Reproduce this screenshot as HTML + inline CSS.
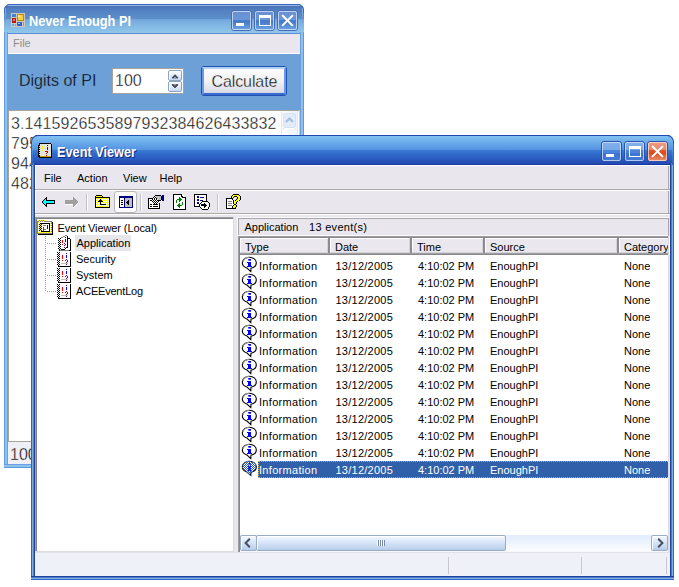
<!DOCTYPE html>
<html><head><meta charset="utf-8">
<style>
*{box-sizing:border-box}
html,body{margin:0;padding:0}
body{width:679px;height:587px;background:#fff;position:relative;overflow:hidden;font-family:"Liberation Sans",sans-serif}
.a{position:absolute}
.t{position:absolute;white-space:nowrap;line-height:1;color:#000}
</style></head><body>
<div class="a" style="left:4px;top:4px;width:300px;height:464px;background:#6ca0d6;border-radius:6px 6px 0 0;overflow:hidden">
<div class="a" style="left:0;top:0;width:300px;height:30px;background:linear-gradient(#4070c8 0px,#4070c8 1px,#90b8e8 1px,#90b8e8 2px,#4a72b4 2px,#5280c0 6px,#5888c6 11px,#5c90cc 15px,#6ea4da 15px,#78acdf 17px,#82b8e4 22px,#90c8ea 29px,#5a90e0 29px,#5a90e0 30px)"></div>
<div class="a" style="left:0;top:28px;width:4px;height:436px;background:linear-gradient(90deg,#5a9ae0 0,#5a9ae0 1px,#98c2ea 1px,#8cc0ea 3px,#6aa0e8 3px)"></div>
<div class="a" style="left:296px;top:28px;width:4px;height:436px;background:linear-gradient(90deg,#6aa0e8 0,#6aa0e8 1px,#90c0e8 1px,#90c0e8 3px,#5a9ae0 3px)"></div>
<div class="a" style="left:0;top:460px;width:300px;height:4px;background:linear-gradient(#6aa0e8 0,#6aa0e8 1px,#90c0e8 1px,#90c0e8 3px,#5a9ae0 3px)"></div>
<div class="a" style="left:1px;top:4px;width:1px;height:26px;background:linear-gradient(#90b8e8,#6a98d4 40%,#88bce6 70%,#90c4ea)"></div>
<div class="a" style="left:298px;top:4px;width:1px;height:26px;background:linear-gradient(#90b8e8,#6a98d4 40%,#88bce6 70%,#90c4ea)"></div>
<div class="a" style="left:0;top:0;width:300px;height:9px;border:1px solid #3a66c0;border-bottom:none;border-radius:6px 6px 0 0"></div>
</div>
<svg class="a" style="left:11px;top:13px" width="14" height="14" viewBox="0 0 14 14" shape-rendering="crispEdges">
<rect x="0" y="0" width="14" height="14" fill="#cfc8c0"/>
<rect x="1" y="1" width="4" height="3" fill="#4a80c8"/>
<rect x="6" y="1" width="7" height="7" fill="#b88a10"/><rect x="7" y="2" width="5" height="5" fill="#f8d040"/><rect x="7" y="2" width="2" height="2" fill="#fff0a0"/>
<rect x="1" y="5" width="4" height="5" fill="#b81808"/><rect x="2" y="6" width="2" height="2" fill="#f08070"/>
<rect x="6" y="9" width="5" height="4" fill="#3060d0"/><rect x="7" y="10" width="2" height="1" fill="#a0c0ff"/>
<rect x="1" y="11" width="2" height="2" fill="#6aa0e8"/><rect x="4" y="11" width="1" height="2" fill="#6aa0e8"/><rect x="12" y="9" width="1" height="4" fill="#6aa0e8"/>
<rect x="1" y="4" width="4" height="1" fill="#cfc8c0"/>
</svg>
<div class="t" style="left:28.5px;top:14px;font-size:14px;font-weight:bold;color:#fff;transform:scaleX(0.91);transform-origin:0 0">Never Enough PI</div>
<div class="a" style="left:231px;top:10px;width:21px;height:21px;border:1px solid #4a6cb8;border-radius:3px;background:linear-gradient(#6890d4 0px,#6a96d8 9px,#4a7ccc 9px,#4a7ccc 12px,#4a80d0 12px,#7aaee4 21px)"><div class="a" style="left:0;top:0;width:19px;height:19px;border:1px solid rgba(220,232,248,0.75);border-radius:2px"></div></div>
<div class="a" style="left:236px;top:23px;width:8px;height:3px;background:#fff"></div>
<div class="a" style="left:254px;top:10px;width:21px;height:21px;border:1px solid #4a6cb8;border-radius:3px;background:linear-gradient(#6890d4 0px,#6a96d8 9px,#4a7ccc 9px,#4a7ccc 12px,#4a80d0 12px,#7aaee4 21px)"><div class="a" style="left:0;top:0;width:19px;height:19px;border:1px solid rgba(220,232,248,0.75);border-radius:2px"></div></div>
<div class="a" style="left:259px;top:15px;width:12px;height:11px;border:1px solid #fff;border-top-width:3px"></div>
<div class="a" style="left:277px;top:10px;width:21px;height:21px;border:1px solid #4a6cb8;border-radius:3px;background:linear-gradient(#6890d4 0px,#6a96d8 9px,#4a7ccc 9px,#4a7ccc 12px,#4a80d0 12px,#7aaee4 21px)"><div class="a" style="left:0;top:0;width:19px;height:19px;border:1px solid rgba(220,232,248,0.75);border-radius:2px"></div></div>
<svg class="a" style="left:277px;top:10px" width="21" height="21" viewBox="0 0 21 21"><path d="M5.8 5.8L15.2 15.2M15.2 5.8L5.8 15.2" stroke="#fff" stroke-width="2" stroke-linecap="square"/></svg>
<div class="a" style="left:8px;top:33px;width:292px;height:1px;background:#5a8ad8"></div>
<div class="a" style="left:8px;top:34px;width:292px;height:19px;background:#e9e7ed"></div>
<div class="a" style="left:8px;top:53px;width:292px;height:1px;background:#fff"></div>
<div class="t" style="left:13px;top:38px;font-size:11px;color:#8e8e8e">File</div>
<div class="t" style="left:19px;top:73px;font-size:16px;-webkit-text-stroke:0.35px #6ca0d6">Digits of PI</div>
<div class="a" style="left:112px;top:68px;width:72px;height:26px;background:#fff;border:1px solid #a5a39a"></div>
<div class="t" style="left:115px;top:73px;font-size:16px;-webkit-text-stroke:0.35px #fff">100</div>
<div class="a" style="left:168px;top:70px;width:14px;height:11px;border:1px solid #8ea2c2;border-radius:2px;background:linear-gradient(#fcfdff,#e4eefc 50%,#c4d8f4);box-shadow:inset 1px 1px 0 #fff"></div>
<div class="a" style="left:168px;top:81px;width:14px;height:11px;border:1px solid #8ea2c2;border-radius:2px;background:linear-gradient(#fcfdff,#e4eefc 50%,#c4d8f4);box-shadow:inset 1px 1px 0 #fff"></div>
<svg class="a" style="left:168px;top:70px" width="14" height="22" viewBox="0 0 14 22"><path d="M4 7.9L7 4.7L10 7.9Z" fill="#404858" stroke="#404858" stroke-width="1"/><path d="M4 14.7L7 17.9L10 14.7Z" fill="#404858" stroke="#404858" stroke-width="1"/><path d="M5.9 8L7 6.9L8.1 8Z" fill="#d8e4f6"/><path d="M5.9 14.6L7 15.7L8.1 14.6Z" fill="#d8e4f6"/></svg>
<div class="a" style="left:201px;top:66px;width:86px;height:30px;border:1px solid #2050b0;border-radius:3px;background:linear-gradient(#fdfdfd,#f2f2f4 50%,#dcdfe8 85%,#c8d0e0)"></div>
<div class="a" style="left:202px;top:67px;width:84px;height:28px;border-top:2px solid #b0d0f6;border-left:2px solid #6a9ae6;border-right:2px solid #6a9ae6;border-bottom:2px solid #3a6ad0;border-radius:2px"></div>
<div class="t" style="left:211.5px;top:74px;font-size:16px;letter-spacing:-0.1px;-webkit-text-stroke:0.35px #eeeef0">Calculate</div>
<div class="a" style="left:8px;top:110px;width:292px;height:331px;background:#fff;border-top:1px solid #a5a39a;border-left:1px solid #a5a39a"></div>
<div class="t" style="left:11px;top:116px;font-size:16px;letter-spacing:0.1px;-webkit-text-stroke:0.35px #fff">3.1415926535897932384626433832</div>
<div class="t" style="left:11px;top:136px;font-size:16px;letter-spacing:0.1px;-webkit-text-stroke:0.35px #fff">79502884197169399375105820974</div>
<div class="t" style="left:11px;top:156px;font-size:16px;letter-spacing:0.1px;-webkit-text-stroke:0.35px #fff">94459230781640628620899862803</div>
<div class="t" style="left:11px;top:176px;font-size:16px;letter-spacing:0.1px;-webkit-text-stroke:0.35px #fff">48253421170679</div>
<div class="a" style="left:281px;top:111px;width:17px;height:330px;background:linear-gradient(90deg,#fbfcfe,#eef3fc)"></div>
<div class="a" style="left:281px;top:111px;width:1px;height:330px;background:#dce8f8"></div>
<div class="a" style="left:283px;top:128px;width:13px;height:1px;background:#c4d6f0"></div>
<div class="a" style="left:283px;top:113px;width:13px;height:15px;border:1px solid #d4e2f8;border-radius:2px;background:#e2ecfc;box-shadow:0 1px 0 #fff"></div>
<svg class="a" style="left:283px;top:113px" width="13" height="15" viewBox="0 0 13 15"><path d="M3 9L6.5 5.5L10 9" stroke="#a8bee0" stroke-width="2.2" fill="none"/></svg>
<div class="a" style="left:299px;top:110px;width:1px;height:331px;background:#cfc9c0"></div>
<div class="a" style="left:297px;top:111px;width:1px;height:330px;background:#dbe6f6"></div>
<div class="a" style="left:8px;top:441px;width:292px;height:1px;background:#a5a39a"></div>
<div class="a" style="left:8px;top:442px;width:292px;height:22px;background:#eef0f6"></div>
<div class="t" style="left:10px;top:447px;font-size:16px;-webkit-text-stroke:0.35px #eef0f6">100</div>
<div class="a" style="left:31px;top:135px;width:643px;height:445px;background:#0a48d0;border-radius:7px 7px 0 0;overflow:hidden">
<div class="a" style="left:0;top:0;width:643px;height:30px;background:linear-gradient(#2048b0 0px,#2048b0 1px,#82c2f2 1px,#74b4ec 5px,#62a2e8 10px,#5292e2 15px,#3c7cd4 15px,#3270cc 18px,#2c5ec2 23px,#2448b0 29px,#1a3aa0 29px,#1a3aa0 30px)"></div>
<div class="a" style="left:0;top:28px;width:4px;height:417px;background:linear-gradient(90deg,#3363c6 0,#3363c6 1px,#80acdf 1px,#80acdf 2px,#5080cc 2px,#5080cc 3px,#24449a 3px)"></div>
<div class="a" style="left:639px;top:28px;width:4px;height:417px;background:linear-gradient(90deg,#20409a 0,#20409a 1px,#4a7ad0 1px,#4a7ad0 2px,#80b0e0 2px,#80b0e0 3px,#3565c8 3px)"></div>
<div class="a" style="left:0;top:441px;width:643px;height:4px;background:linear-gradient(#20409a 0,#20409a 1px,#4a7ad0 1px,#4a7ad0 2px,#80b0e0 2px,#80b0e0 3px,#3565c8 3px)"></div>
<div class="a" style="left:1px;top:4px;width:1px;height:26px;background:linear-gradient(#80c0f0,#5a98e4 40%,#3a78d8 60%,#3060c8)"></div>
<div class="a" style="left:641px;top:4px;width:1px;height:26px;background:linear-gradient(#80c0f0,#5a98e4 40%,#3a78d8 60%,#3060c8)"></div>
<div class="a" style="left:0;top:0;width:643px;height:9px;border:1px solid #2048b0;border-bottom:none;border-radius:7px 7px 0 0"></div>
<div class="a" style="left:0;top:9px;width:1px;height:21px;background:#3363c6"></div>
<div class="a" style="left:642px;top:9px;width:1px;height:21px;background:#3565c8"></div>
</div>
<svg class="a" style="left:36px;top:141px" width="17" height="17" viewBox="0 0 17 17" shape-rendering="crispEdges"><rect x="3" y="2" width="12" height="1" fill="#000"/><rect x="3" y="3" width="1" height="1" fill="#000"/><rect x="4" y="3" width="11" height="1" fill="#e4e4dc"/><rect x="15" y="3" width="1" height="1" fill="#000"/><rect x="2" y="4" width="2" height="1" fill="#000"/><rect x="4" y="4" width="7" height="1" fill="#e4e4dc"/><rect x="11" y="4" width="1" height="1" fill="#0020e0"/><rect x="12" y="4" width="3" height="1" fill="#e4e4dc"/><rect x="15" y="4" width="1" height="1" fill="#000"/><rect x="2" y="5" width="1" height="1" fill="#000"/><rect x="3" y="5" width="1" height="1" fill="#d8ecd8"/><rect x="4" y="5" width="2" height="1" fill="#e4e4dc"/><rect x="6" y="5" width="1" height="1" fill="#f0f000"/><rect x="7" y="5" width="8" height="1" fill="#e4e4dc"/><rect x="15" y="5" width="1" height="1" fill="#000"/><rect x="2" y="6" width="2" height="1" fill="#000"/><rect x="4" y="6" width="2" height="1" fill="#e4e4dc"/><rect x="6" y="6" width="1" height="1" fill="#f0f000"/><rect x="7" y="6" width="4" height="1" fill="#e4e4dc"/><rect x="11" y="6" width="1" height="1" fill="#0020e0"/><rect x="12" y="6" width="3" height="1" fill="#e4e4dc"/><rect x="15" y="6" width="1" height="1" fill="#000"/><rect x="2" y="7" width="1" height="1" fill="#000"/><rect x="3" y="7" width="1" height="1" fill="#d8ecd8"/><rect x="4" y="7" width="2" height="1" fill="#e4e4dc"/><rect x="6" y="7" width="1" height="1" fill="#f0f000"/><rect x="7" y="7" width="4" height="1" fill="#e4e4dc"/><rect x="11" y="7" width="1" height="1" fill="#0020e0"/><rect x="12" y="7" width="3" height="1" fill="#e4e4dc"/><rect x="15" y="7" width="1" height="1" fill="#000"/><rect x="2" y="8" width="2" height="1" fill="#000"/><rect x="4" y="8" width="7" height="1" fill="#e4e4dc"/><rect x="11" y="8" width="1" height="1" fill="#0020e0"/><rect x="12" y="8" width="3" height="1" fill="#e4e4dc"/><rect x="15" y="8" width="1" height="1" fill="#000"/><rect x="2" y="9" width="1" height="1" fill="#000"/><rect x="3" y="9" width="1" height="1" fill="#d8ecd8"/><rect x="4" y="9" width="2" height="1" fill="#e4e4dc"/><rect x="6" y="9" width="1" height="1" fill="#f0f000"/><rect x="7" y="9" width="8" height="1" fill="#e4e4dc"/><rect x="15" y="9" width="1" height="1" fill="#000"/><rect x="2" y="10" width="2" height="1" fill="#000"/><rect x="4" y="10" width="5" height="1" fill="#e4e4dc"/><rect x="9" y="10" width="3" height="1" fill="#c00000"/><rect x="12" y="10" width="3" height="1" fill="#e4e4dc"/><rect x="15" y="10" width="1" height="1" fill="#000"/><rect x="2" y="11" width="1" height="1" fill="#000"/><rect x="3" y="11" width="1" height="1" fill="#d8ecd8"/><rect x="4" y="11" width="7" height="1" fill="#e4e4dc"/><rect x="11" y="11" width="1" height="1" fill="#c00000"/><rect x="12" y="11" width="3" height="1" fill="#e4e4dc"/><rect x="15" y="11" width="1" height="1" fill="#000"/><rect x="2" y="12" width="2" height="1" fill="#000"/><rect x="4" y="12" width="6" height="1" fill="#e4e4dc"/><rect x="10" y="12" width="1" height="1" fill="#c00000"/><rect x="11" y="12" width="4" height="1" fill="#e4e4dc"/><rect x="15" y="12" width="1" height="1" fill="#000"/><rect x="2" y="13" width="1" height="1" fill="#000"/><rect x="3" y="13" width="1" height="1" fill="#d8ecd8"/><rect x="4" y="13" width="11" height="1" fill="#e4e4dc"/><rect x="15" y="13" width="1" height="1" fill="#000"/><rect x="2" y="14" width="2" height="1" fill="#000"/><rect x="4" y="14" width="6" height="1" fill="#e4e4dc"/><rect x="10" y="14" width="1" height="1" fill="#c00000"/><rect x="11" y="14" width="4" height="1" fill="#e4e4dc"/><rect x="15" y="14" width="1" height="1" fill="#000"/><rect x="2" y="15" width="2" height="1" fill="#000"/><rect x="4" y="15" width="11" height="1" fill="#c0a800"/><rect x="15" y="15" width="1" height="1" fill="#000"/><rect x="3" y="16" width="13" height="1" fill="#000"/></svg>
<div class="t" style="left:57px;top:145px;font-size:14px;font-weight:bold;color:#fff;transform:scaleX(0.91);transform-origin:0 0;text-shadow:1px 1px 0 #102a80">Event Viewer</div>
<div class="a" style="left:601px;top:141px;width:21px;height:21px;border:1px solid #2a50b0;border-radius:3px;background:linear-gradient(#82b0ec 0px,#78a8e8 8px,#4a84dc 8px,#4a84dc 11px,#3c74d0 11px,#4a7cd4 21px)"><div class="a" style="left:0;top:0;width:19px;height:19px;border:1px solid rgba(220,236,252,0.7);border-radius:2px"></div></div>
<div class="a" style="left:606px;top:154px;width:8px;height:3px;background:#fff"></div>
<div class="a" style="left:624px;top:141px;width:21px;height:21px;border:1px solid #2a50b0;border-radius:3px;background:linear-gradient(#82b0ec 0px,#78a8e8 8px,#4a84dc 8px,#4a84dc 11px,#3c74d0 11px,#4a7cd4 21px)"><div class="a" style="left:0;top:0;width:19px;height:19px;border:1px solid rgba(220,236,252,0.7);border-radius:2px"></div></div>
<div class="a" style="left:629px;top:146px;width:12px;height:11px;border:1px solid #fff;border-top-width:3px"></div>
<div class="a" style="left:647px;top:141px;width:21px;height:21px;border:1px solid #2a50b0;border-radius:3px;background:linear-gradient(#ec9c84 0px,#e88a6c 8px,#dc5a2c 8px,#d84a18 12px,#dc5828 12px,#eca08a 21px)"><div class="a" style="left:0;top:0;width:19px;height:19px;border:1px solid rgba(255,230,220,0.7);border-radius:2px"></div></div>
<svg class="a" style="left:647px;top:141px" width="21" height="21" viewBox="0 0 21 21"><path d="M5.8 5.8L15.2 15.2M15.2 5.8L5.8 15.2" stroke="#fff" stroke-width="2" stroke-linecap="square"/></svg>
<div class="a" style="left:35px;top:165px;width:635px;height:411px;background:#e9e7ed"></div>
<div class="a" style="left:35px;top:165px;width:635px;height:1px;background:#fff"></div>
<div class="t" style="left:44px;top:173px;font-size:11px;">File</div>
<div class="t" style="left:77px;top:173px;font-size:11px;">Action</div>
<div class="t" style="left:123px;top:173px;font-size:11px;">View</div>
<div class="t" style="left:159.5px;top:173px;font-size:11px;">Help</div>
<div class="a" style="left:35px;top:189px;width:635px;height:1px;background:#aca9a6"></div>
<div class="a" style="left:35px;top:190px;width:635px;height:1px;background:#fff"></div>
<div class="a" style="left:35px;top:213px;width:635px;height:1px;background:#aca9a6"></div>
<div class="a" style="left:35px;top:214px;width:635px;height:1px;background:#fff"></div>
<div class="a" style="left:86px;top:194px;width:1px;height:17px;background:#c5c2c5"></div>
<div class="a" style="left:87px;top:194px;width:1px;height:17px;background:#fff"></div>
<div class="a" style="left:140px;top:194px;width:1px;height:17px;background:#c5c2c5"></div>
<div class="a" style="left:141px;top:194px;width:1px;height:17px;background:#fff"></div>
<div class="a" style="left:217px;top:194px;width:1px;height:17px;background:#c5c2c5"></div>
<div class="a" style="left:218px;top:194px;width:1px;height:17px;background:#fff"></div>
<div class="a" style="left:668px;top:166px;width:1px;height:23px;background:#aca9a6"></div>
<div class="a" style="left:668px;top:191px;width:1px;height:22px;background:#aca9a6"></div>
<div class="a" style="left:35px;top:166px;width:1px;height:23px;background:#fff"></div>
<div class="a" style="left:35px;top:191px;width:1px;height:22px;background:#fff"></div>
<div class="a" style="left:114px;top:191px;width:23px;height:22px;border:1px solid #b8b8b8;border-radius:3px;background:#fbfbfb"></div>
<svg class="a" style="left:42px;top:196px" width="13" height="11" viewBox="0 0 13 11" shape-rendering="crispEdges"><rect x="4" y="1" width="1" height="1" fill="#000"/><rect x="3" y="2" width="2" height="1" fill="#000"/><rect x="2" y="3" width="1" height="1" fill="#000"/><rect x="3" y="3" width="1" height="1" fill="#00ffff"/><rect x="4" y="3" width="1" height="1" fill="#000"/><rect x="1" y="4" width="1" height="1" fill="#000"/><rect x="2" y="4" width="2" height="1" fill="#00ffff"/><rect x="4" y="4" width="9" height="1" fill="#000"/><rect x="0" y="5" width="1" height="1" fill="#000"/><rect x="1" y="5" width="11" height="1" fill="#00ffff"/><rect x="12" y="5" width="1" height="1" fill="#000"/><rect x="0" y="6" width="1" height="1" fill="#000"/><rect x="1" y="6" width="11" height="1" fill="#00ffff"/><rect x="12" y="6" width="1" height="1" fill="#000"/><rect x="1" y="7" width="1" height="1" fill="#000"/><rect x="2" y="7" width="2" height="1" fill="#00ffff"/><rect x="4" y="7" width="9" height="1" fill="#000"/><rect x="2" y="8" width="1" height="1" fill="#000"/><rect x="3" y="8" width="1" height="1" fill="#00ffff"/><rect x="4" y="8" width="1" height="1" fill="#000"/><rect x="3" y="9" width="2" height="1" fill="#000"/><rect x="4" y="10" width="1" height="1" fill="#000"/></svg>
<svg class="a" style="left:65px;top:196px" width="14" height="12" viewBox="0 0 14 12" shape-rendering="crispEdges"><rect x="8" y="1" width="1" height="1" fill="#a0a0a0"/><rect x="8" y="2" width="2" height="1" fill="#a0a0a0"/><rect x="8" y="3" width="3" height="1" fill="#a0a0a0"/><rect x="0" y="4" width="12" height="1" fill="#a0a0a0"/><rect x="0" y="5" width="13" height="1" fill="#a0a0a0"/><rect x="0" y="6" width="13" height="1" fill="#a0a0a0"/><rect x="13" y="6" width="1" height="1" fill="#ffffff"/><rect x="0" y="7" width="12" height="1" fill="#a0a0a0"/><rect x="12" y="7" width="1" height="1" fill="#ffffff"/><rect x="0" y="8" width="8" height="1" fill="#ffffff"/><rect x="8" y="8" width="3" height="1" fill="#a0a0a0"/><rect x="11" y="8" width="1" height="1" fill="#ffffff"/><rect x="8" y="9" width="2" height="1" fill="#a0a0a0"/><rect x="10" y="9" width="1" height="1" fill="#ffffff"/><rect x="8" y="10" width="1" height="1" fill="#a0a0a0"/><rect x="9" y="10" width="1" height="1" fill="#ffffff"/><rect x="8" y="11" width="1" height="1" fill="#ffffff"/></svg>
<svg class="a" style="left:93px;top:193px" width="18" height="15" viewBox="0 0 18 15" shape-rendering="crispEdges"><rect x="3" y="2" width="6" height="1" fill="#000"/><rect x="2" y="3" width="1" height="1" fill="#000"/><rect x="3" y="3" width="1" height="1" fill="#ffff00"/><rect x="4" y="3" width="1" height="1" fill="#fff"/><rect x="5" y="3" width="1" height="1" fill="#ffff00"/><rect x="6" y="3" width="1" height="1" fill="#fff"/><rect x="7" y="3" width="1" height="1" fill="#ffff00"/><rect x="8" y="3" width="1" height="1" fill="#fff"/><rect x="9" y="3" width="1" height="1" fill="#000"/><rect x="2" y="4" width="15" height="1" fill="#000"/><rect x="2" y="5" width="1" height="1" fill="#000"/><rect x="3" y="5" width="1" height="1" fill="#ffff00"/><rect x="4" y="5" width="1" height="1" fill="#fff"/><rect x="5" y="5" width="1" height="1" fill="#ffff00"/><rect x="6" y="5" width="1" height="1" fill="#fff"/><rect x="7" y="5" width="1" height="1" fill="#ffff00"/><rect x="8" y="5" width="1" height="1" fill="#fff"/><rect x="9" y="5" width="1" height="1" fill="#ffff00"/><rect x="10" y="5" width="1" height="1" fill="#fff"/><rect x="11" y="5" width="1" height="1" fill="#ffff00"/><rect x="12" y="5" width="1" height="1" fill="#fff"/><rect x="13" y="5" width="1" height="1" fill="#ffff00"/><rect x="14" y="5" width="1" height="1" fill="#fff"/><rect x="15" y="5" width="1" height="1" fill="#ffff00"/><rect x="16" y="5" width="1" height="1" fill="#000"/><rect x="2" y="6" width="1" height="1" fill="#000"/><rect x="3" y="6" width="1" height="1" fill="#fff"/><rect x="4" y="6" width="1" height="1" fill="#ffff00"/><rect x="5" y="6" width="1" height="1" fill="#fff"/><rect x="6" y="6" width="1" height="1" fill="#ffff00"/><rect x="7" y="6" width="1" height="1" fill="#000"/><rect x="8" y="6" width="1" height="1" fill="#ffff00"/><rect x="9" y="6" width="1" height="1" fill="#fff"/><rect x="10" y="6" width="1" height="1" fill="#ffff00"/><rect x="11" y="6" width="1" height="1" fill="#fff"/><rect x="12" y="6" width="1" height="1" fill="#ffff00"/><rect x="13" y="6" width="1" height="1" fill="#fff"/><rect x="14" y="6" width="1" height="1" fill="#ffff00"/><rect x="15" y="6" width="1" height="1" fill="#fff"/><rect x="16" y="6" width="1" height="1" fill="#000"/><rect x="2" y="7" width="1" height="1" fill="#000"/><rect x="3" y="7" width="1" height="1" fill="#ffff00"/><rect x="4" y="7" width="1" height="1" fill="#fff"/><rect x="5" y="7" width="1" height="1" fill="#ffff00"/><rect x="6" y="7" width="3" height="1" fill="#000"/><rect x="9" y="7" width="1" height="1" fill="#ffff00"/><rect x="10" y="7" width="1" height="1" fill="#fff"/><rect x="11" y="7" width="1" height="1" fill="#ffff00"/><rect x="12" y="7" width="1" height="1" fill="#fff"/><rect x="13" y="7" width="1" height="1" fill="#ffff00"/><rect x="14" y="7" width="1" height="1" fill="#fff"/><rect x="15" y="7" width="1" height="1" fill="#ffff00"/><rect x="16" y="7" width="1" height="1" fill="#000"/><rect x="2" y="8" width="1" height="1" fill="#000"/><rect x="3" y="8" width="1" height="1" fill="#fff"/><rect x="4" y="8" width="1" height="1" fill="#ffff00"/><rect x="5" y="8" width="5" height="1" fill="#000"/><rect x="10" y="8" width="1" height="1" fill="#ffff00"/><rect x="11" y="8" width="1" height="1" fill="#fff"/><rect x="12" y="8" width="1" height="1" fill="#ffff00"/><rect x="13" y="8" width="1" height="1" fill="#fff"/><rect x="14" y="8" width="1" height="1" fill="#ffff00"/><rect x="15" y="8" width="1" height="1" fill="#fff"/><rect x="16" y="8" width="1" height="1" fill="#000"/><rect x="2" y="9" width="1" height="1" fill="#000"/><rect x="3" y="9" width="1" height="1" fill="#ffff00"/><rect x="4" y="9" width="1" height="1" fill="#fff"/><rect x="5" y="9" width="1" height="1" fill="#ffff00"/><rect x="6" y="9" width="1" height="1" fill="#fff"/><rect x="7" y="9" width="1" height="1" fill="#000"/><rect x="8" y="9" width="1" height="1" fill="#fff"/><rect x="9" y="9" width="1" height="1" fill="#ffff00"/><rect x="10" y="9" width="1" height="1" fill="#fff"/><rect x="11" y="9" width="1" height="1" fill="#ffff00"/><rect x="12" y="9" width="1" height="1" fill="#fff"/><rect x="13" y="9" width="1" height="1" fill="#ffff00"/><rect x="14" y="9" width="1" height="1" fill="#fff"/><rect x="15" y="9" width="1" height="1" fill="#ffff00"/><rect x="16" y="9" width="1" height="1" fill="#000"/><rect x="2" y="10" width="1" height="1" fill="#000"/><rect x="3" y="10" width="1" height="1" fill="#fff"/><rect x="4" y="10" width="1" height="1" fill="#ffff00"/><rect x="5" y="10" width="1" height="1" fill="#fff"/><rect x="6" y="10" width="1" height="1" fill="#ffff00"/><rect x="7" y="10" width="1" height="1" fill="#000"/><rect x="8" y="10" width="1" height="1" fill="#ffff00"/><rect x="9" y="10" width="1" height="1" fill="#fff"/><rect x="10" y="10" width="1" height="1" fill="#ffff00"/><rect x="11" y="10" width="1" height="1" fill="#fff"/><rect x="12" y="10" width="1" height="1" fill="#ffff00"/><rect x="13" y="10" width="1" height="1" fill="#fff"/><rect x="14" y="10" width="1" height="1" fill="#ffff00"/><rect x="15" y="10" width="1" height="1" fill="#fff"/><rect x="16" y="10" width="1" height="1" fill="#000"/><rect x="2" y="11" width="1" height="1" fill="#000"/><rect x="3" y="11" width="1" height="1" fill="#ffff00"/><rect x="4" y="11" width="1" height="1" fill="#fff"/><rect x="5" y="11" width="1" height="1" fill="#ffff00"/><rect x="6" y="11" width="1" height="1" fill="#fff"/><rect x="7" y="11" width="6" height="1" fill="#000"/><rect x="13" y="11" width="1" height="1" fill="#ffff00"/><rect x="14" y="11" width="1" height="1" fill="#fff"/><rect x="15" y="11" width="1" height="1" fill="#ffff00"/><rect x="16" y="11" width="1" height="1" fill="#000"/><rect x="2" y="12" width="1" height="1" fill="#000"/><rect x="3" y="12" width="1" height="1" fill="#fff"/><rect x="4" y="12" width="1" height="1" fill="#ffff00"/><rect x="5" y="12" width="1" height="1" fill="#fff"/><rect x="6" y="12" width="1" height="1" fill="#ffff00"/><rect x="7" y="12" width="1" height="1" fill="#fff"/><rect x="8" y="12" width="1" height="1" fill="#ffff00"/><rect x="9" y="12" width="1" height="1" fill="#fff"/><rect x="10" y="12" width="1" height="1" fill="#ffff00"/><rect x="11" y="12" width="1" height="1" fill="#fff"/><rect x="12" y="12" width="1" height="1" fill="#ffff00"/><rect x="13" y="12" width="1" height="1" fill="#fff"/><rect x="14" y="12" width="1" height="1" fill="#ffff00"/><rect x="15" y="12" width="1" height="1" fill="#fff"/><rect x="16" y="12" width="1" height="1" fill="#000"/><rect x="2" y="13" width="1" height="1" fill="#000"/><rect x="3" y="13" width="1" height="1" fill="#ffff00"/><rect x="4" y="13" width="1" height="1" fill="#fff"/><rect x="5" y="13" width="1" height="1" fill="#ffff00"/><rect x="6" y="13" width="1" height="1" fill="#fff"/><rect x="7" y="13" width="1" height="1" fill="#ffff00"/><rect x="8" y="13" width="1" height="1" fill="#fff"/><rect x="9" y="13" width="1" height="1" fill="#ffff00"/><rect x="10" y="13" width="1" height="1" fill="#fff"/><rect x="11" y="13" width="1" height="1" fill="#ffff00"/><rect x="12" y="13" width="1" height="1" fill="#fff"/><rect x="13" y="13" width="1" height="1" fill="#ffff00"/><rect x="14" y="13" width="1" height="1" fill="#fff"/><rect x="15" y="13" width="1" height="1" fill="#ffff00"/><rect x="16" y="13" width="1" height="1" fill="#000"/><rect x="2" y="14" width="15" height="1" fill="#000"/></svg>
<svg class="a" style="left:119px;top:196px" width="15" height="12" viewBox="0 0 15 12" shape-rendering="crispEdges">
<rect x="0" y="0" width="14" height="12" fill="#000080"/><rect x="1" y="2" width="4" height="9" fill="#fff"/><rect x="6" y="2" width="7" height="9" fill="#c0c0c0"/>
<rect x="2" y="4" width="2" height="1" fill="#000"/><rect x="2" y="6" width="2" height="1" fill="#000"/><rect x="2" y="8" width="2" height="1" fill="#000"/>
<path d="M10 3.5V9.5L7 6.5Z" fill="#000"/>
</svg>
<svg class="a" style="left:146px;top:192px" width="18" height="17" viewBox="0 0 18 17" shape-rendering="crispEdges"><rect x="9" y="3" width="6" height="1" fill="#000"/><rect x="16" y="3" width="2" height="1" fill="#000080"/><rect x="8" y="4" width="1" height="1" fill="#000"/><rect x="9" y="4" width="1" height="1" fill="#fff"/><rect x="10" y="4" width="5" height="1" fill="#c0c0c0"/><rect x="15" y="4" width="1" height="1" fill="#000"/><rect x="16" y="4" width="2" height="1" fill="#000080"/><rect x="7" y="5" width="1" height="1" fill="#000"/><rect x="8" y="5" width="1" height="1" fill="#fff"/><rect x="9" y="5" width="1" height="1" fill="#000"/><rect x="10" y="5" width="5" height="1" fill="#c0c0c0"/><rect x="15" y="5" width="1" height="1" fill="#000"/><rect x="16" y="5" width="2" height="1" fill="#000080"/><rect x="2" y="6" width="5" height="1" fill="#000"/><rect x="7" y="6" width="1" height="1" fill="#fff"/><rect x="8" y="6" width="1" height="1" fill="#000"/><rect x="9" y="6" width="1" height="1" fill="#fff"/><rect x="10" y="6" width="1" height="1" fill="#000"/><rect x="11" y="6" width="4" height="1" fill="#c0c0c0"/><rect x="15" y="6" width="1" height="1" fill="#000"/><rect x="16" y="6" width="2" height="1" fill="#000080"/><rect x="2" y="7" width="1" height="1" fill="#000"/><rect x="3" y="7" width="3" height="1" fill="#fff"/><rect x="6" y="7" width="1" height="1" fill="#000"/><rect x="7" y="7" width="1" height="1" fill="#fff"/><rect x="8" y="7" width="1" height="1" fill="#000"/><rect x="9" y="7" width="1" height="1" fill="#fff"/><rect x="10" y="7" width="1" height="1" fill="#000"/><rect x="11" y="7" width="1" height="1" fill="#fff"/><rect x="12" y="7" width="3" height="1" fill="#c0c0c0"/><rect x="15" y="7" width="1" height="1" fill="#000"/><rect x="16" y="7" width="2" height="1" fill="#000080"/><rect x="2" y="8" width="1" height="1" fill="#000"/><rect x="3" y="8" width="1" height="1" fill="#fff"/><rect x="4" y="8" width="2" height="1" fill="#000"/><rect x="6" y="8" width="1" height="1" fill="#fff"/><rect x="7" y="8" width="1" height="1" fill="#000"/><rect x="8" y="8" width="1" height="1" fill="#fff"/><rect x="9" y="8" width="1" height="1" fill="#000"/><rect x="10" y="8" width="1" height="1" fill="#fff"/><rect x="11" y="8" width="4" height="1" fill="#000"/><rect x="15" y="8" width="1" height="1" fill="#fff"/><rect x="16" y="8" width="2" height="1" fill="#000080"/><rect x="2" y="9" width="1" height="1" fill="#000"/><rect x="3" y="9" width="3" height="1" fill="#fff"/><rect x="6" y="9" width="1" height="1" fill="#000"/><rect x="7" y="9" width="1" height="1" fill="#fff"/><rect x="8" y="9" width="1" height="1" fill="#000"/><rect x="9" y="9" width="1" height="1" fill="#fff"/><rect x="10" y="9" width="1" height="1" fill="#000"/><rect x="11" y="9" width="1" height="1" fill="#fff"/><rect x="12" y="9" width="1" height="1" fill="#000"/><rect x="2" y="10" width="1" height="1" fill="#000"/><rect x="3" y="10" width="4" height="1" fill="#fff"/><rect x="7" y="10" width="1" height="1" fill="#000"/><rect x="8" y="10" width="1" height="1" fill="#fff"/><rect x="9" y="10" width="1" height="1" fill="#000"/><rect x="10" y="10" width="1" height="1" fill="#fff"/><rect x="11" y="10" width="1" height="1" fill="#000"/><rect x="12" y="10" width="1" height="1" fill="#fff"/><rect x="2" y="11" width="1" height="1" fill="#000"/><rect x="3" y="11" width="5" height="1" fill="#fff"/><rect x="8" y="11" width="1" height="1" fill="#000"/><rect x="9" y="11" width="1" height="1" fill="#fff"/><rect x="10" y="11" width="1" height="1" fill="#000"/><rect x="11" y="11" width="1" height="1" fill="#fff"/><rect x="13" y="11" width="1" height="1" fill="#000"/><rect x="2" y="12" width="1" height="1" fill="#000"/><rect x="3" y="12" width="1" height="1" fill="#fff"/><rect x="4" y="12" width="2" height="1" fill="#000"/><rect x="6" y="12" width="1" height="1" fill="#fff"/><rect x="7" y="12" width="5" height="1" fill="#000"/><rect x="12" y="12" width="1" height="1" fill="#fff"/><rect x="13" y="12" width="1" height="1" fill="#000"/><rect x="2" y="13" width="1" height="1" fill="#000"/><rect x="3" y="13" width="10" height="1" fill="#fff"/><rect x="13" y="13" width="1" height="1" fill="#000"/><rect x="2" y="14" width="1" height="1" fill="#000"/><rect x="3" y="14" width="1" height="1" fill="#fff"/><rect x="4" y="14" width="2" height="1" fill="#000"/><rect x="6" y="14" width="1" height="1" fill="#fff"/><rect x="7" y="14" width="5" height="1" fill="#000"/><rect x="12" y="14" width="1" height="1" fill="#fff"/><rect x="13" y="14" width="1" height="1" fill="#000"/><rect x="2" y="15" width="1" height="1" fill="#000"/><rect x="3" y="15" width="10" height="1" fill="#fff"/><rect x="13" y="15" width="1" height="1" fill="#000"/><rect x="2" y="16" width="12" height="1" fill="#000"/></svg>
<svg class="a" style="left:170px;top:192px" width="16" height="18" viewBox="0 0 16 18" shape-rendering="crispEdges"><rect x="3" y="2" width="9" height="1" fill="#000"/><rect x="12" y="2" width="1" height="1" fill="#fff"/><rect x="3" y="3" width="1" height="1" fill="#000"/><rect x="4" y="3" width="7" height="1" fill="#fff"/><rect x="11" y="3" width="1" height="1" fill="#000"/><rect x="12" y="3" width="2" height="1" fill="#fff"/><rect x="3" y="4" width="1" height="1" fill="#000"/><rect x="4" y="4" width="7" height="1" fill="#fff"/><rect x="11" y="4" width="2" height="1" fill="#000"/><rect x="13" y="4" width="2" height="1" fill="#fff"/><rect x="3" y="5" width="1" height="1" fill="#000"/><rect x="4" y="5" width="5" height="1" fill="#fff"/><rect x="9" y="5" width="1" height="1" fill="#008000"/><rect x="10" y="5" width="2" height="1" fill="#fff"/><rect x="12" y="5" width="4" height="1" fill="#000"/><rect x="3" y="6" width="1" height="1" fill="#000"/><rect x="4" y="6" width="5" height="1" fill="#fff"/><rect x="9" y="6" width="2" height="1" fill="#008000"/><rect x="11" y="6" width="4" height="1" fill="#fff"/><rect x="15" y="6" width="1" height="1" fill="#000"/><rect x="3" y="7" width="1" height="1" fill="#000"/><rect x="4" y="7" width="3" height="1" fill="#fff"/><rect x="7" y="7" width="5" height="1" fill="#008000"/><rect x="12" y="7" width="3" height="1" fill="#fff"/><rect x="15" y="7" width="1" height="1" fill="#000"/><rect x="3" y="8" width="1" height="1" fill="#000"/><rect x="4" y="8" width="2" height="1" fill="#fff"/><rect x="6" y="8" width="1" height="1" fill="#008000"/><rect x="7" y="8" width="2" height="1" fill="#fff"/><rect x="9" y="8" width="2" height="1" fill="#008000"/><rect x="11" y="8" width="4" height="1" fill="#fff"/><rect x="15" y="8" width="1" height="1" fill="#000"/><rect x="3" y="9" width="1" height="1" fill="#000"/><rect x="4" y="9" width="2" height="1" fill="#fff"/><rect x="6" y="9" width="1" height="1" fill="#008000"/><rect x="7" y="9" width="2" height="1" fill="#fff"/><rect x="9" y="9" width="1" height="1" fill="#008000"/><rect x="10" y="9" width="5" height="1" fill="#fff"/><rect x="15" y="9" width="1" height="1" fill="#000"/><rect x="3" y="10" width="1" height="1" fill="#000"/><rect x="4" y="10" width="2" height="1" fill="#fff"/><rect x="6" y="10" width="1" height="1" fill="#008000"/><rect x="7" y="10" width="5" height="1" fill="#fff"/><rect x="12" y="10" width="1" height="1" fill="#008000"/><rect x="13" y="10" width="2" height="1" fill="#fff"/><rect x="15" y="10" width="1" height="1" fill="#000"/><rect x="3" y="11" width="1" height="1" fill="#000"/><rect x="4" y="11" width="5" height="1" fill="#fff"/><rect x="9" y="11" width="1" height="1" fill="#008000"/><rect x="10" y="11" width="2" height="1" fill="#fff"/><rect x="12" y="11" width="1" height="1" fill="#008000"/><rect x="13" y="11" width="2" height="1" fill="#fff"/><rect x="15" y="11" width="1" height="1" fill="#000"/><rect x="3" y="12" width="1" height="1" fill="#000"/><rect x="4" y="12" width="4" height="1" fill="#fff"/><rect x="8" y="12" width="2" height="1" fill="#008000"/><rect x="10" y="12" width="2" height="1" fill="#fff"/><rect x="12" y="12" width="1" height="1" fill="#008000"/><rect x="13" y="12" width="2" height="1" fill="#fff"/><rect x="15" y="12" width="1" height="1" fill="#000"/><rect x="3" y="13" width="1" height="1" fill="#000"/><rect x="4" y="13" width="3" height="1" fill="#fff"/><rect x="7" y="13" width="5" height="1" fill="#008000"/><rect x="12" y="13" width="3" height="1" fill="#fff"/><rect x="15" y="13" width="1" height="1" fill="#000"/><rect x="3" y="14" width="1" height="1" fill="#000"/><rect x="4" y="14" width="4" height="1" fill="#fff"/><rect x="8" y="14" width="2" height="1" fill="#008000"/><rect x="10" y="14" width="5" height="1" fill="#fff"/><rect x="15" y="14" width="1" height="1" fill="#000"/><rect x="3" y="15" width="1" height="1" fill="#000"/><rect x="4" y="15" width="5" height="1" fill="#fff"/><rect x="9" y="15" width="1" height="1" fill="#008000"/><rect x="10" y="15" width="5" height="1" fill="#fff"/><rect x="15" y="15" width="1" height="1" fill="#000"/><rect x="3" y="16" width="1" height="1" fill="#000"/><rect x="4" y="16" width="11" height="1" fill="#fff"/><rect x="15" y="16" width="1" height="1" fill="#000"/><rect x="3" y="17" width="13" height="1" fill="#000"/></svg>
<svg class="a" style="left:192px;top:192px" width="19" height="18" viewBox="0 0 19 18" shape-rendering="crispEdges"><rect x="2" y="2" width="13" height="1" fill="#000"/><rect x="2" y="3" width="1" height="1" fill="#000"/><rect x="3" y="3" width="11" height="1" fill="#fff"/><rect x="14" y="3" width="1" height="1" fill="#000"/><rect x="2" y="4" width="1" height="1" fill="#000"/><rect x="3" y="4" width="2" height="1" fill="#fff"/><rect x="5" y="4" width="2" height="1" fill="#000080"/><rect x="7" y="4" width="7" height="1" fill="#fff"/><rect x="14" y="4" width="1" height="1" fill="#000"/><rect x="2" y="5" width="1" height="1" fill="#000"/><rect x="3" y="5" width="2" height="1" fill="#fff"/><rect x="5" y="5" width="2" height="1" fill="#000080"/><rect x="7" y="5" width="1" height="1" fill="#fff"/><rect x="8" y="5" width="4" height="1" fill="#000080"/><rect x="12" y="5" width="2" height="1" fill="#fff"/><rect x="14" y="5" width="1" height="1" fill="#000"/><rect x="2" y="6" width="1" height="1" fill="#000"/><rect x="3" y="6" width="11" height="1" fill="#fff"/><rect x="14" y="6" width="1" height="1" fill="#000"/><rect x="2" y="7" width="1" height="1" fill="#000"/><rect x="3" y="7" width="2" height="1" fill="#fff"/><rect x="5" y="7" width="2" height="1" fill="#000080"/><rect x="7" y="7" width="7" height="1" fill="#fff"/><rect x="14" y="7" width="1" height="1" fill="#000"/><rect x="2" y="8" width="1" height="1" fill="#000"/><rect x="3" y="8" width="2" height="1" fill="#fff"/><rect x="5" y="8" width="2" height="1" fill="#000080"/><rect x="7" y="8" width="1" height="1" fill="#fff"/><rect x="8" y="8" width="3" height="1" fill="#000080"/><rect x="11" y="8" width="3" height="1" fill="#fff"/><rect x="14" y="8" width="1" height="1" fill="#000"/><rect x="2" y="9" width="1" height="1" fill="#000"/><rect x="3" y="9" width="7" height="1" fill="#fff"/><rect x="10" y="9" width="6" height="1" fill="#000"/><rect x="2" y="10" width="1" height="1" fill="#000"/><rect x="3" y="10" width="2" height="1" fill="#fff"/><rect x="5" y="10" width="2" height="1" fill="#000080"/><rect x="7" y="10" width="2" height="1" fill="#fff"/><rect x="9" y="10" width="1" height="1" fill="#000"/><rect x="10" y="10" width="6" height="1" fill="#fff"/><rect x="16" y="10" width="1" height="1" fill="#000"/><rect x="2" y="11" width="1" height="1" fill="#000"/><rect x="3" y="11" width="2" height="1" fill="#fff"/><rect x="5" y="11" width="2" height="1" fill="#000080"/><rect x="7" y="11" width="1" height="1" fill="#fff"/><rect x="8" y="11" width="1" height="1" fill="#000"/><rect x="9" y="11" width="3" height="1" fill="#fff"/><rect x="12" y="11" width="1" height="1" fill="#000"/><rect x="13" y="11" width="4" height="1" fill="#fff"/><rect x="17" y="11" width="1" height="1" fill="#000"/><rect x="2" y="12" width="1" height="1" fill="#000"/><rect x="3" y="12" width="4" height="1" fill="#fff"/><rect x="7" y="12" width="1" height="1" fill="#000"/><rect x="8" y="12" width="1" height="1" fill="#fff"/><rect x="9" y="12" width="5" height="1" fill="#000"/><rect x="14" y="12" width="3" height="1" fill="#fff"/><rect x="17" y="12" width="1" height="1" fill="#000"/><rect x="2" y="13" width="1" height="1" fill="#000"/><rect x="3" y="13" width="4" height="1" fill="#fff"/><rect x="7" y="13" width="1" height="1" fill="#000"/><rect x="8" y="13" width="1" height="1" fill="#fff"/><rect x="9" y="13" width="6" height="1" fill="#000"/><rect x="15" y="13" width="2" height="1" fill="#fff"/><rect x="17" y="13" width="1" height="1" fill="#000"/><rect x="2" y="14" width="6" height="1" fill="#000"/><rect x="8" y="14" width="4" height="1" fill="#fff"/><rect x="12" y="14" width="2" height="1" fill="#000"/><rect x="14" y="14" width="3" height="1" fill="#fff"/><rect x="17" y="14" width="1" height="1" fill="#000"/><rect x="8" y="15" width="1" height="1" fill="#000"/><rect x="9" y="15" width="3" height="1" fill="#fff"/><rect x="12" y="15" width="1" height="1" fill="#000"/><rect x="13" y="15" width="3" height="1" fill="#fff"/><rect x="16" y="15" width="1" height="1" fill="#000"/><rect x="9" y="16" width="1" height="1" fill="#000"/><rect x="10" y="16" width="6" height="1" fill="#fff"/><rect x="16" y="16" width="1" height="1" fill="#000"/><rect x="10" y="17" width="6" height="1" fill="#000"/></svg>
<svg class="a" style="left:223px;top:192px" width="19" height="17" viewBox="0 0 19 17" shape-rendering="crispEdges"><rect x="10" y="2" width="6" height="1" fill="#000"/><rect x="9" y="3" width="1" height="1" fill="#000"/><rect x="10" y="3" width="6" height="1" fill="#ffff00"/><rect x="16" y="3" width="1" height="1" fill="#000"/><rect x="8" y="4" width="1" height="1" fill="#000"/><rect x="9" y="4" width="2" height="1" fill="#ffff00"/><rect x="11" y="4" width="3" height="1" fill="#000"/><rect x="14" y="4" width="3" height="1" fill="#ffff00"/><rect x="17" y="4" width="1" height="1" fill="#000"/><rect x="8" y="5" width="1" height="1" fill="#000"/><rect x="9" y="5" width="1" height="1" fill="#ffff00"/><rect x="10" y="5" width="1" height="1" fill="#000"/><rect x="14" y="5" width="1" height="1" fill="#000"/><rect x="15" y="5" width="2" height="1" fill="#ffff00"/><rect x="17" y="5" width="1" height="1" fill="#000"/><rect x="3" y="6" width="7" height="1" fill="#000"/><rect x="14" y="6" width="1" height="1" fill="#000"/><rect x="15" y="6" width="2" height="1" fill="#ffff00"/><rect x="17" y="6" width="1" height="1" fill="#000"/><rect x="3" y="7" width="1" height="1" fill="#000"/><rect x="4" y="7" width="5" height="1" fill="#fff"/><rect x="9" y="7" width="1" height="1" fill="#000"/><rect x="13" y="7" width="1" height="1" fill="#000"/><rect x="14" y="7" width="3" height="1" fill="#ffff00"/><rect x="17" y="7" width="1" height="1" fill="#000"/><rect x="3" y="8" width="1" height="1" fill="#000"/><rect x="4" y="8" width="6" height="1" fill="#fff"/><rect x="10" y="8" width="1" height="1" fill="#000"/><rect x="12" y="8" width="1" height="1" fill="#000"/><rect x="13" y="8" width="3" height="1" fill="#ffff00"/><rect x="16" y="8" width="1" height="1" fill="#000"/><rect x="3" y="9" width="1" height="1" fill="#000"/><rect x="4" y="9" width="1" height="1" fill="#fff"/><rect x="5" y="9" width="4" height="1" fill="#808080"/><rect x="9" y="9" width="1" height="1" fill="#fff"/><rect x="10" y="9" width="1" height="1" fill="#000"/><rect x="11" y="9" width="3" height="1" fill="#ffff00"/><rect x="14" y="9" width="1" height="1" fill="#000"/><rect x="3" y="10" width="1" height="1" fill="#000"/><rect x="4" y="10" width="6" height="1" fill="#fff"/><rect x="10" y="10" width="1" height="1" fill="#000"/><rect x="11" y="10" width="2" height="1" fill="#ffff00"/><rect x="13" y="10" width="1" height="1" fill="#000"/><rect x="3" y="11" width="1" height="1" fill="#000"/><rect x="4" y="11" width="1" height="1" fill="#fff"/><rect x="5" y="11" width="4" height="1" fill="#808080"/><rect x="9" y="11" width="1" height="1" fill="#fff"/><rect x="10" y="11" width="1" height="1" fill="#000"/><rect x="11" y="11" width="2" height="1" fill="#ffff00"/><rect x="13" y="11" width="1" height="1" fill="#000"/><rect x="3" y="12" width="1" height="1" fill="#000"/><rect x="4" y="12" width="7" height="1" fill="#fff"/><rect x="11" y="12" width="2" height="1" fill="#000"/><rect x="3" y="13" width="1" height="1" fill="#000"/><rect x="4" y="13" width="1" height="1" fill="#fff"/><rect x="5" y="13" width="4" height="1" fill="#808080"/><rect x="9" y="13" width="1" height="1" fill="#fff"/><rect x="10" y="13" width="1" height="1" fill="#000"/><rect x="11" y="13" width="2" height="1" fill="#ffff00"/><rect x="13" y="13" width="1" height="1" fill="#000"/><rect x="3" y="14" width="1" height="1" fill="#000"/><rect x="4" y="14" width="5" height="1" fill="#fff"/><rect x="9" y="14" width="1" height="1" fill="#000"/><rect x="10" y="14" width="3" height="1" fill="#ffff00"/><rect x="13" y="14" width="1" height="1" fill="#000"/><rect x="3" y="15" width="1" height="1" fill="#000"/><rect x="4" y="15" width="5" height="1" fill="#fff"/><rect x="9" y="15" width="1" height="1" fill="#000"/><rect x="10" y="15" width="2" height="1" fill="#ffff00"/><rect x="12" y="15" width="1" height="1" fill="#000"/><rect x="3" y="16" width="10" height="1" fill="#000"/></svg>
<div class="a" style="left:35px;top:217px;width:199px;height:335px;background:#fff;border-top:2px solid;border-left:2px solid;border-color:#a0a0a0 transparent transparent #a0a0a0"></div>
<div class="a" style="left:36px;top:218px;width:197px;height:1px;background:#808288"></div>
<div class="a" style="left:36px;top:218px;width:1px;height:334px;background:#808288"></div>
<div class="a" style="left:233px;top:217px;width:1px;height:335px;background:#dcdce0"></div>
<div class="a" style="left:35px;top:551px;width:199px;height:1px;background:#dcdce0"></div>
<svg class="a" style="left:36px;top:218px" width="18" height="17" viewBox="0 0 18 17" shape-rendering="crispEdges"><rect x="2" y="2" width="1" height="1" fill="#ffff00"/><rect x="3" y="2" width="1" height="1" fill="#808080"/><rect x="4" y="2" width="1" height="1" fill="#ffff00"/><rect x="5" y="2" width="1" height="1" fill="#808080"/><rect x="6" y="2" width="1" height="1" fill="#ffff00"/><rect x="7" y="2" width="1" height="1" fill="#808080"/><rect x="8" y="2" width="1" height="1" fill="#ffff00"/><rect x="1" y="3" width="2" height="1" fill="#808080"/><rect x="3" y="3" width="1" height="1" fill="#ffff00"/><rect x="4" y="3" width="1" height="1" fill="#808080"/><rect x="5" y="3" width="1" height="1" fill="#ffff00"/><rect x="6" y="3" width="1" height="1" fill="#808080"/><rect x="7" y="3" width="1" height="1" fill="#ffff00"/><rect x="8" y="3" width="8" height="1" fill="#808080"/><rect x="1" y="4" width="1" height="1" fill="#808080"/><rect x="2" y="4" width="1" height="1" fill="#ffff00"/><rect x="3" y="4" width="12" height="1" fill="#fff"/><rect x="15" y="4" width="1" height="1" fill="#808080"/><rect x="16" y="4" width="1" height="1" fill="#000"/><rect x="1" y="5" width="1" height="1" fill="#808080"/><rect x="2" y="5" width="1" height="1" fill="#fff"/><rect x="3" y="5" width="1" height="1" fill="#ffff00"/><rect x="4" y="5" width="10" height="1" fill="#000"/><rect x="14" y="5" width="1" height="1" fill="#ffff00"/><rect x="15" y="5" width="1" height="1" fill="#808080"/><rect x="16" y="5" width="1" height="1" fill="#000"/><rect x="1" y="6" width="1" height="1" fill="#808080"/><rect x="2" y="6" width="1" height="1" fill="#ffff00"/><rect x="3" y="6" width="1" height="1" fill="#000"/><rect x="4" y="6" width="1" height="1" fill="#ffff00"/><rect x="5" y="6" width="1" height="1" fill="#000"/><rect x="6" y="6" width="7" height="1" fill="#fff"/><rect x="13" y="6" width="1" height="1" fill="#000"/><rect x="14" y="6" width="1" height="1" fill="#fff"/><rect x="15" y="6" width="1" height="1" fill="#ffff00"/><rect x="16" y="6" width="1" height="1" fill="#000"/><rect x="1" y="7" width="1" height="1" fill="#808080"/><rect x="2" y="7" width="1" height="1" fill="#fff"/><rect x="3" y="7" width="1" height="1" fill="#ffff00"/><rect x="4" y="7" width="1" height="1" fill="#000"/><rect x="5" y="7" width="1" height="1" fill="#ffff00"/><rect x="6" y="7" width="1" height="1" fill="#fff"/><rect x="7" y="7" width="3" height="1" fill="#808080"/><rect x="10" y="7" width="1" height="1" fill="#fff"/><rect x="11" y="7" width="1" height="1" fill="#0000ff"/><rect x="12" y="7" width="1" height="1" fill="#fff"/><rect x="13" y="7" width="1" height="1" fill="#000"/><rect x="14" y="7" width="1" height="1" fill="#ffff00"/><rect x="15" y="7" width="1" height="1" fill="#808080"/><rect x="16" y="7" width="1" height="1" fill="#000"/><rect x="1" y="8" width="1" height="1" fill="#808080"/><rect x="2" y="8" width="1" height="1" fill="#ffff00"/><rect x="3" y="8" width="1" height="1" fill="#000"/><rect x="4" y="8" width="1" height="1" fill="#ffff00"/><rect x="5" y="8" width="1" height="1" fill="#000"/><rect x="6" y="8" width="5" height="1" fill="#fff"/><rect x="11" y="8" width="1" height="1" fill="#0000ff"/><rect x="12" y="8" width="1" height="1" fill="#fff"/><rect x="13" y="8" width="1" height="1" fill="#000"/><rect x="14" y="8" width="1" height="1" fill="#fff"/><rect x="15" y="8" width="1" height="1" fill="#ffff00"/><rect x="16" y="8" width="1" height="1" fill="#000"/><rect x="1" y="9" width="1" height="1" fill="#808080"/><rect x="2" y="9" width="1" height="1" fill="#fff"/><rect x="3" y="9" width="1" height="1" fill="#ffff00"/><rect x="4" y="9" width="1" height="1" fill="#000"/><rect x="5" y="9" width="1" height="1" fill="#ffff00"/><rect x="6" y="9" width="1" height="1" fill="#fff"/><rect x="7" y="9" width="1" height="1" fill="#ff0000"/><rect x="8" y="9" width="3" height="1" fill="#fff"/><rect x="11" y="9" width="1" height="1" fill="#0000ff"/><rect x="12" y="9" width="1" height="1" fill="#fff"/><rect x="13" y="9" width="1" height="1" fill="#000"/><rect x="14" y="9" width="1" height="1" fill="#ffff00"/><rect x="15" y="9" width="1" height="1" fill="#808080"/><rect x="16" y="9" width="1" height="1" fill="#000"/><rect x="1" y="10" width="1" height="1" fill="#808080"/><rect x="2" y="10" width="1" height="1" fill="#ffff00"/><rect x="3" y="10" width="1" height="1" fill="#000"/><rect x="4" y="10" width="1" height="1" fill="#ffff00"/><rect x="5" y="10" width="1" height="1" fill="#000"/><rect x="6" y="10" width="1" height="1" fill="#fff"/><rect x="7" y="10" width="1" height="1" fill="#ff0000"/><rect x="8" y="10" width="3" height="1" fill="#fff"/><rect x="11" y="10" width="1" height="1" fill="#0000ff"/><rect x="12" y="10" width="1" height="1" fill="#fff"/><rect x="13" y="10" width="1" height="1" fill="#000"/><rect x="14" y="10" width="1" height="1" fill="#fff"/><rect x="15" y="10" width="1" height="1" fill="#ffff00"/><rect x="16" y="10" width="1" height="1" fill="#000"/><rect x="1" y="11" width="1" height="1" fill="#808080"/><rect x="2" y="11" width="1" height="1" fill="#fff"/><rect x="3" y="11" width="1" height="1" fill="#ffff00"/><rect x="4" y="11" width="1" height="1" fill="#000"/><rect x="5" y="11" width="1" height="1" fill="#ffff00"/><rect x="6" y="11" width="1" height="1" fill="#fff"/><rect x="7" y="11" width="1" height="1" fill="#ff0000"/><rect x="8" y="11" width="2" height="1" fill="#808080"/><rect x="10" y="11" width="3" height="1" fill="#fff"/><rect x="13" y="11" width="1" height="1" fill="#000"/><rect x="14" y="11" width="1" height="1" fill="#ffff00"/><rect x="15" y="11" width="1" height="1" fill="#808080"/><rect x="16" y="11" width="1" height="1" fill="#000"/><rect x="1" y="12" width="1" height="1" fill="#808080"/><rect x="2" y="12" width="1" height="1" fill="#ffff00"/><rect x="3" y="12" width="1" height="1" fill="#000"/><rect x="4" y="12" width="1" height="1" fill="#ffff00"/><rect x="5" y="12" width="1" height="1" fill="#000"/><rect x="6" y="12" width="1" height="1" fill="#fff"/><rect x="7" y="12" width="1" height="1" fill="#ff0000"/><rect x="8" y="12" width="5" height="1" fill="#fff"/><rect x="13" y="12" width="1" height="1" fill="#000"/><rect x="14" y="12" width="1" height="1" fill="#fff"/><rect x="15" y="12" width="1" height="1" fill="#ffff00"/><rect x="16" y="12" width="1" height="1" fill="#000"/><rect x="1" y="13" width="1" height="1" fill="#808080"/><rect x="2" y="13" width="1" height="1" fill="#fff"/><rect x="3" y="13" width="1" height="1" fill="#ffff00"/><rect x="4" y="13" width="1" height="1" fill="#fff"/><rect x="5" y="13" width="9" height="1" fill="#000"/><rect x="14" y="13" width="1" height="1" fill="#ffff00"/><rect x="15" y="13" width="1" height="1" fill="#808080"/><rect x="16" y="13" width="1" height="1" fill="#000"/><rect x="1" y="14" width="1" height="1" fill="#808080"/><rect x="2" y="14" width="1" height="1" fill="#ffff00"/><rect x="3" y="14" width="1" height="1" fill="#fff"/><rect x="4" y="14" width="1" height="1" fill="#ffff00"/><rect x="5" y="14" width="1" height="1" fill="#fff"/><rect x="6" y="14" width="1" height="1" fill="#ffff00"/><rect x="7" y="14" width="1" height="1" fill="#fff"/><rect x="8" y="14" width="1" height="1" fill="#ffff00"/><rect x="9" y="14" width="1" height="1" fill="#fff"/><rect x="10" y="14" width="1" height="1" fill="#ffff00"/><rect x="11" y="14" width="1" height="1" fill="#fff"/><rect x="12" y="14" width="1" height="1" fill="#ffff00"/><rect x="13" y="14" width="1" height="1" fill="#fff"/><rect x="14" y="14" width="1" height="1" fill="#ffff00"/><rect x="15" y="14" width="1" height="1" fill="#fff"/><rect x="16" y="14" width="1" height="1" fill="#000"/><rect x="1" y="15" width="15" height="1" fill="#808080"/><rect x="16" y="15" width="1" height="1" fill="#000"/><rect x="2" y="16" width="15" height="1" fill="#000"/></svg>
<div class="t" style="left:57.5px;top:223px;font-size:11px;letter-spacing:-0.1px">Event Viewer (Local)</div>
<div class="a" style="left:45px;top:236px;width:1px;height:56px;background:repeating-linear-gradient(#a0a0a0 0,#a0a0a0 1px,transparent 1px,transparent 2px)"></div>
<div class="a" style="left:46px;top:243px;width:11px;height:1px;background:repeating-linear-gradient(90deg,transparent 0,transparent 1px,#a0a0a0 1px,#a0a0a0 2px)"></div>
<div class="a" style="left:46px;top:259px;width:11px;height:1px;background:repeating-linear-gradient(90deg,transparent 0,transparent 1px,#a0a0a0 1px,#a0a0a0 2px)"></div>
<div class="a" style="left:46px;top:275px;width:11px;height:1px;background:repeating-linear-gradient(90deg,transparent 0,transparent 1px,#a0a0a0 1px,#a0a0a0 2px)"></div>
<div class="a" style="left:46px;top:291px;width:11px;height:1px;background:repeating-linear-gradient(90deg,transparent 0,transparent 1px,#a0a0a0 1px,#a0a0a0 2px)"></div>
<div class="a" style="left:75px;top:235px;width:56px;height:16px;background:#e7e6ea"></div>
<svg class="a" style="left:55px;top:233px" width="17" height="18" viewBox="0 0 17 18" shape-rendering="crispEdges"><rect x="10" y="2" width="2" height="1" fill="#808080"/><rect x="8" y="3" width="2" height="1" fill="#808080"/><rect x="10" y="3" width="2" height="1" fill="#fff"/><rect x="12" y="3" width="1" height="1" fill="#000"/><rect x="6" y="4" width="2" height="1" fill="#808080"/><rect x="8" y="4" width="2" height="1" fill="#fff"/><rect x="10" y="4" width="1" height="1" fill="#0000ff"/><rect x="11" y="4" width="1" height="1" fill="#fff"/><rect x="12" y="4" width="1" height="1" fill="#000"/><rect x="3" y="5" width="1" height="1" fill="#000"/><rect x="4" y="5" width="1" height="1" fill="#fff"/><rect x="5" y="5" width="1" height="1" fill="#000"/><rect x="6" y="5" width="6" height="1" fill="#fff"/><rect x="12" y="5" width="3" height="1" fill="#000"/><rect x="3" y="6" width="1" height="1" fill="#fff"/><rect x="4" y="6" width="1" height="1" fill="#000"/><rect x="5" y="6" width="5" height="1" fill="#fff"/><rect x="10" y="6" width="1" height="1" fill="#0000ff"/><rect x="11" y="6" width="1" height="1" fill="#fff"/><rect x="12" y="6" width="1" height="1" fill="#000"/><rect x="13" y="6" width="2" height="1" fill="#fff"/><rect x="15" y="6" width="1" height="1" fill="#000"/><rect x="3" y="7" width="1" height="1" fill="#000"/><rect x="4" y="7" width="1" height="1" fill="#fff"/><rect x="5" y="7" width="1" height="1" fill="#000"/><rect x="6" y="7" width="1" height="1" fill="#fff"/><rect x="7" y="7" width="1" height="1" fill="#ff0000"/><rect x="8" y="7" width="2" height="1" fill="#fff"/><rect x="10" y="7" width="1" height="1" fill="#0000ff"/><rect x="11" y="7" width="1" height="1" fill="#fff"/><rect x="12" y="7" width="1" height="1" fill="#000"/><rect x="13" y="7" width="2" height="1" fill="#fff"/><rect x="15" y="7" width="1" height="1" fill="#000"/><rect x="3" y="8" width="1" height="1" fill="#fff"/><rect x="4" y="8" width="1" height="1" fill="#000"/><rect x="5" y="8" width="2" height="1" fill="#fff"/><rect x="7" y="8" width="1" height="1" fill="#ff0000"/><rect x="8" y="8" width="2" height="1" fill="#fff"/><rect x="10" y="8" width="1" height="1" fill="#0000ff"/><rect x="11" y="8" width="1" height="1" fill="#fff"/><rect x="12" y="8" width="1" height="1" fill="#000"/><rect x="13" y="8" width="2" height="1" fill="#fff"/><rect x="15" y="8" width="1" height="1" fill="#000"/><rect x="3" y="9" width="1" height="1" fill="#000"/><rect x="4" y="9" width="1" height="1" fill="#fff"/><rect x="5" y="9" width="1" height="1" fill="#000"/><rect x="6" y="9" width="1" height="1" fill="#fff"/><rect x="7" y="9" width="1" height="1" fill="#ff0000"/><rect x="8" y="9" width="4" height="1" fill="#fff"/><rect x="12" y="9" width="1" height="1" fill="#000"/><rect x="13" y="9" width="2" height="1" fill="#fff"/><rect x="15" y="9" width="1" height="1" fill="#000"/><rect x="3" y="10" width="1" height="1" fill="#fff"/><rect x="4" y="10" width="1" height="1" fill="#000"/><rect x="5" y="10" width="4" height="1" fill="#fff"/><rect x="9" y="10" width="1" height="1" fill="#800080"/><rect x="10" y="10" width="2" height="1" fill="#fff"/><rect x="12" y="10" width="1" height="1" fill="#000"/><rect x="13" y="10" width="2" height="1" fill="#fff"/><rect x="15" y="10" width="1" height="1" fill="#000"/><rect x="3" y="11" width="1" height="1" fill="#000"/><rect x="4" y="11" width="1" height="1" fill="#fff"/><rect x="5" y="11" width="1" height="1" fill="#000"/><rect x="6" y="11" width="1" height="1" fill="#fff"/><rect x="7" y="11" width="1" height="1" fill="#ff0000"/><rect x="8" y="11" width="2" height="1" fill="#fff"/><rect x="10" y="11" width="1" height="1" fill="#800080"/><rect x="11" y="11" width="1" height="1" fill="#fff"/><rect x="12" y="11" width="1" height="1" fill="#000"/><rect x="13" y="11" width="2" height="1" fill="#fff"/><rect x="15" y="11" width="1" height="1" fill="#000"/><rect x="3" y="12" width="1" height="1" fill="#fff"/><rect x="4" y="12" width="1" height="1" fill="#000"/><rect x="5" y="12" width="4" height="1" fill="#fff"/><rect x="9" y="12" width="1" height="1" fill="#800080"/><rect x="10" y="12" width="2" height="1" fill="#fff"/><rect x="12" y="12" width="1" height="1" fill="#000"/><rect x="13" y="12" width="2" height="1" fill="#fff"/><rect x="15" y="12" width="1" height="1" fill="#000"/><rect x="3" y="13" width="1" height="1" fill="#000"/><rect x="4" y="13" width="1" height="1" fill="#fff"/><rect x="5" y="13" width="1" height="1" fill="#000"/><rect x="6" y="13" width="6" height="1" fill="#fff"/><rect x="12" y="13" width="1" height="1" fill="#000"/><rect x="13" y="13" width="2" height="1" fill="#fff"/><rect x="15" y="13" width="1" height="1" fill="#000"/><rect x="3" y="14" width="1" height="1" fill="#fff"/><rect x="4" y="14" width="1" height="1" fill="#000"/><rect x="5" y="14" width="4" height="1" fill="#fff"/><rect x="9" y="14" width="1" height="1" fill="#800080"/><rect x="10" y="14" width="1" height="1" fill="#fff"/><rect x="11" y="14" width="2" height="1" fill="#000"/><rect x="13" y="14" width="2" height="1" fill="#fff"/><rect x="15" y="14" width="1" height="1" fill="#000"/><rect x="3" y="15" width="1" height="1" fill="#000"/><rect x="4" y="15" width="1" height="1" fill="#fff"/><rect x="5" y="15" width="1" height="1" fill="#000"/><rect x="6" y="15" width="4" height="1" fill="#fff"/><rect x="10" y="15" width="1" height="1" fill="#000"/><rect x="11" y="15" width="4" height="1" fill="#fff"/><rect x="15" y="15" width="1" height="1" fill="#000"/><rect x="3" y="16" width="1" height="1" fill="#fff"/><rect x="4" y="16" width="1" height="1" fill="#000"/><rect x="5" y="16" width="1" height="1" fill="#fff"/><rect x="6" y="16" width="4" height="1" fill="#000"/><rect x="10" y="16" width="5" height="1" fill="#fff"/><rect x="15" y="16" width="1" height="1" fill="#000"/><rect x="4" y="17" width="1" height="1" fill="#000"/><rect x="5" y="17" width="9" height="1" fill="#808080"/><rect x="14" y="17" width="2" height="1" fill="#000"/></svg>
<div class="t" style="left:76.5px;top:238px;font-size:11px;">Application</div>
<svg class="a" style="left:55px;top:250px" width="17" height="17" viewBox="0 0 17 17" shape-rendering="crispEdges"><rect x="2" y="2" width="1" height="1" fill="#000"/><rect x="3" y="2" width="1" height="1" fill="#fff"/><rect x="4" y="2" width="1" height="1" fill="#000"/><rect x="5" y="2" width="10" height="1" fill="#fff"/><rect x="15" y="2" width="1" height="1" fill="#000"/><rect x="2" y="3" width="1" height="1" fill="#fff"/><rect x="3" y="3" width="1" height="1" fill="#000"/><rect x="4" y="3" width="7" height="1" fill="#fff"/><rect x="11" y="3" width="1" height="1" fill="#0000ff"/><rect x="12" y="3" width="3" height="1" fill="#fff"/><rect x="15" y="3" width="1" height="1" fill="#000"/><rect x="2" y="4" width="1" height="1" fill="#000"/><rect x="3" y="4" width="1" height="1" fill="#fff"/><rect x="4" y="4" width="1" height="1" fill="#000"/><rect x="5" y="4" width="10" height="1" fill="#fff"/><rect x="15" y="4" width="1" height="1" fill="#000"/><rect x="2" y="5" width="1" height="1" fill="#fff"/><rect x="3" y="5" width="1" height="1" fill="#000"/><rect x="4" y="5" width="3" height="1" fill="#fff"/><rect x="7" y="5" width="1" height="1" fill="#ff0000"/><rect x="8" y="5" width="3" height="1" fill="#fff"/><rect x="11" y="5" width="1" height="1" fill="#0000ff"/><rect x="12" y="5" width="3" height="1" fill="#fff"/><rect x="15" y="5" width="1" height="1" fill="#000"/><rect x="2" y="6" width="1" height="1" fill="#000"/><rect x="3" y="6" width="1" height="1" fill="#fff"/><rect x="4" y="6" width="1" height="1" fill="#000"/><rect x="5" y="6" width="2" height="1" fill="#fff"/><rect x="7" y="6" width="1" height="1" fill="#ff0000"/><rect x="8" y="6" width="3" height="1" fill="#fff"/><rect x="11" y="6" width="1" height="1" fill="#0000ff"/><rect x="12" y="6" width="3" height="1" fill="#fff"/><rect x="15" y="6" width="1" height="1" fill="#000"/><rect x="2" y="7" width="1" height="1" fill="#fff"/><rect x="3" y="7" width="1" height="1" fill="#000"/><rect x="4" y="7" width="3" height="1" fill="#fff"/><rect x="7" y="7" width="1" height="1" fill="#ff0000"/><rect x="8" y="7" width="3" height="1" fill="#fff"/><rect x="11" y="7" width="1" height="1" fill="#0000ff"/><rect x="12" y="7" width="3" height="1" fill="#fff"/><rect x="15" y="7" width="1" height="1" fill="#000"/><rect x="2" y="8" width="1" height="1" fill="#000"/><rect x="3" y="8" width="1" height="1" fill="#fff"/><rect x="4" y="8" width="1" height="1" fill="#000"/><rect x="5" y="8" width="2" height="1" fill="#fff"/><rect x="7" y="8" width="1" height="1" fill="#ff0000"/><rect x="8" y="8" width="7" height="1" fill="#fff"/><rect x="15" y="8" width="1" height="1" fill="#000"/><rect x="2" y="9" width="1" height="1" fill="#fff"/><rect x="3" y="9" width="1" height="1" fill="#000"/><rect x="4" y="9" width="7" height="1" fill="#fff"/><rect x="11" y="9" width="1" height="1" fill="#800080"/><rect x="12" y="9" width="3" height="1" fill="#fff"/><rect x="15" y="9" width="1" height="1" fill="#000"/><rect x="2" y="10" width="1" height="1" fill="#000"/><rect x="3" y="10" width="1" height="1" fill="#fff"/><rect x="4" y="10" width="1" height="1" fill="#000"/><rect x="5" y="10" width="2" height="1" fill="#fff"/><rect x="7" y="10" width="1" height="1" fill="#ff0000"/><rect x="8" y="10" width="2" height="1" fill="#fff"/><rect x="10" y="10" width="1" height="1" fill="#800080"/><rect x="11" y="10" width="1" height="1" fill="#fff"/><rect x="12" y="10" width="1" height="1" fill="#800080"/><rect x="13" y="10" width="2" height="1" fill="#fff"/><rect x="15" y="10" width="1" height="1" fill="#000"/><rect x="2" y="11" width="1" height="1" fill="#fff"/><rect x="3" y="11" width="1" height="1" fill="#000"/><rect x="4" y="11" width="8" height="1" fill="#fff"/><rect x="12" y="11" width="1" height="1" fill="#800080"/><rect x="13" y="11" width="2" height="1" fill="#fff"/><rect x="15" y="11" width="1" height="1" fill="#000"/><rect x="2" y="12" width="1" height="1" fill="#000"/><rect x="3" y="12" width="1" height="1" fill="#fff"/><rect x="4" y="12" width="1" height="1" fill="#000"/><rect x="5" y="12" width="6" height="1" fill="#fff"/><rect x="11" y="12" width="1" height="1" fill="#800080"/><rect x="12" y="12" width="3" height="1" fill="#fff"/><rect x="15" y="12" width="1" height="1" fill="#000"/><rect x="2" y="13" width="1" height="1" fill="#fff"/><rect x="3" y="13" width="1" height="1" fill="#000"/><rect x="4" y="13" width="2" height="1" fill="#fff"/><rect x="6" y="13" width="7" height="1" fill="#c0c0c0"/><rect x="13" y="13" width="2" height="1" fill="#fff"/><rect x="15" y="13" width="1" height="1" fill="#000"/><rect x="2" y="14" width="1" height="1" fill="#000"/><rect x="3" y="14" width="1" height="1" fill="#fff"/><rect x="4" y="14" width="1" height="1" fill="#000"/><rect x="5" y="14" width="6" height="1" fill="#fff"/><rect x="11" y="14" width="1" height="1" fill="#800080"/><rect x="12" y="14" width="3" height="1" fill="#fff"/><rect x="15" y="14" width="1" height="1" fill="#000"/><rect x="3" y="15" width="1" height="1" fill="#000"/><rect x="4" y="15" width="11" height="1" fill="#fff"/><rect x="15" y="15" width="1" height="1" fill="#000"/><rect x="3" y="16" width="13" height="1" fill="#000"/></svg>
<div class="t" style="left:76px;top:254px;font-size:11px;">Security</div>
<svg class="a" style="left:55px;top:266px" width="17" height="17" viewBox="0 0 17 17" shape-rendering="crispEdges"><rect x="2" y="2" width="1" height="1" fill="#000"/><rect x="3" y="2" width="1" height="1" fill="#fff"/><rect x="4" y="2" width="1" height="1" fill="#000"/><rect x="5" y="2" width="10" height="1" fill="#fff"/><rect x="15" y="2" width="1" height="1" fill="#000"/><rect x="2" y="3" width="1" height="1" fill="#fff"/><rect x="3" y="3" width="1" height="1" fill="#000"/><rect x="4" y="3" width="7" height="1" fill="#fff"/><rect x="11" y="3" width="1" height="1" fill="#0000ff"/><rect x="12" y="3" width="3" height="1" fill="#fff"/><rect x="15" y="3" width="1" height="1" fill="#000"/><rect x="2" y="4" width="1" height="1" fill="#000"/><rect x="3" y="4" width="1" height="1" fill="#fff"/><rect x="4" y="4" width="1" height="1" fill="#000"/><rect x="5" y="4" width="10" height="1" fill="#fff"/><rect x="15" y="4" width="1" height="1" fill="#000"/><rect x="2" y="5" width="1" height="1" fill="#fff"/><rect x="3" y="5" width="1" height="1" fill="#000"/><rect x="4" y="5" width="3" height="1" fill="#fff"/><rect x="7" y="5" width="1" height="1" fill="#ff0000"/><rect x="8" y="5" width="3" height="1" fill="#fff"/><rect x="11" y="5" width="1" height="1" fill="#0000ff"/><rect x="12" y="5" width="3" height="1" fill="#fff"/><rect x="15" y="5" width="1" height="1" fill="#000"/><rect x="2" y="6" width="1" height="1" fill="#000"/><rect x="3" y="6" width="1" height="1" fill="#fff"/><rect x="4" y="6" width="1" height="1" fill="#000"/><rect x="5" y="6" width="2" height="1" fill="#fff"/><rect x="7" y="6" width="1" height="1" fill="#ff0000"/><rect x="8" y="6" width="3" height="1" fill="#fff"/><rect x="11" y="6" width="1" height="1" fill="#0000ff"/><rect x="12" y="6" width="3" height="1" fill="#fff"/><rect x="15" y="6" width="1" height="1" fill="#000"/><rect x="2" y="7" width="1" height="1" fill="#fff"/><rect x="3" y="7" width="1" height="1" fill="#000"/><rect x="4" y="7" width="3" height="1" fill="#fff"/><rect x="7" y="7" width="1" height="1" fill="#ff0000"/><rect x="8" y="7" width="3" height="1" fill="#fff"/><rect x="11" y="7" width="1" height="1" fill="#0000ff"/><rect x="12" y="7" width="3" height="1" fill="#fff"/><rect x="15" y="7" width="1" height="1" fill="#000"/><rect x="2" y="8" width="1" height="1" fill="#000"/><rect x="3" y="8" width="1" height="1" fill="#fff"/><rect x="4" y="8" width="1" height="1" fill="#000"/><rect x="5" y="8" width="2" height="1" fill="#fff"/><rect x="7" y="8" width="1" height="1" fill="#ff0000"/><rect x="8" y="8" width="7" height="1" fill="#fff"/><rect x="15" y="8" width="1" height="1" fill="#000"/><rect x="2" y="9" width="1" height="1" fill="#fff"/><rect x="3" y="9" width="1" height="1" fill="#000"/><rect x="4" y="9" width="7" height="1" fill="#fff"/><rect x="11" y="9" width="1" height="1" fill="#800080"/><rect x="12" y="9" width="3" height="1" fill="#fff"/><rect x="15" y="9" width="1" height="1" fill="#000"/><rect x="2" y="10" width="1" height="1" fill="#000"/><rect x="3" y="10" width="1" height="1" fill="#fff"/><rect x="4" y="10" width="1" height="1" fill="#000"/><rect x="5" y="10" width="2" height="1" fill="#fff"/><rect x="7" y="10" width="1" height="1" fill="#ff0000"/><rect x="8" y="10" width="2" height="1" fill="#fff"/><rect x="10" y="10" width="1" height="1" fill="#800080"/><rect x="11" y="10" width="1" height="1" fill="#fff"/><rect x="12" y="10" width="1" height="1" fill="#800080"/><rect x="13" y="10" width="2" height="1" fill="#fff"/><rect x="15" y="10" width="1" height="1" fill="#000"/><rect x="2" y="11" width="1" height="1" fill="#fff"/><rect x="3" y="11" width="1" height="1" fill="#000"/><rect x="4" y="11" width="8" height="1" fill="#fff"/><rect x="12" y="11" width="1" height="1" fill="#800080"/><rect x="13" y="11" width="2" height="1" fill="#fff"/><rect x="15" y="11" width="1" height="1" fill="#000"/><rect x="2" y="12" width="1" height="1" fill="#000"/><rect x="3" y="12" width="1" height="1" fill="#fff"/><rect x="4" y="12" width="1" height="1" fill="#000"/><rect x="5" y="12" width="6" height="1" fill="#fff"/><rect x="11" y="12" width="1" height="1" fill="#800080"/><rect x="12" y="12" width="3" height="1" fill="#fff"/><rect x="15" y="12" width="1" height="1" fill="#000"/><rect x="2" y="13" width="1" height="1" fill="#fff"/><rect x="3" y="13" width="1" height="1" fill="#000"/><rect x="4" y="13" width="2" height="1" fill="#fff"/><rect x="6" y="13" width="7" height="1" fill="#c0c0c0"/><rect x="13" y="13" width="2" height="1" fill="#fff"/><rect x="15" y="13" width="1" height="1" fill="#000"/><rect x="2" y="14" width="1" height="1" fill="#000"/><rect x="3" y="14" width="1" height="1" fill="#fff"/><rect x="4" y="14" width="1" height="1" fill="#000"/><rect x="5" y="14" width="6" height="1" fill="#fff"/><rect x="11" y="14" width="1" height="1" fill="#800080"/><rect x="12" y="14" width="3" height="1" fill="#fff"/><rect x="15" y="14" width="1" height="1" fill="#000"/><rect x="3" y="15" width="1" height="1" fill="#000"/><rect x="4" y="15" width="11" height="1" fill="#fff"/><rect x="15" y="15" width="1" height="1" fill="#000"/><rect x="3" y="16" width="13" height="1" fill="#000"/></svg>
<div class="t" style="left:76px;top:270px;font-size:11px;">System</div>
<svg class="a" style="left:55px;top:282px" width="17" height="17" viewBox="0 0 17 17" shape-rendering="crispEdges"><rect x="2" y="2" width="1" height="1" fill="#000"/><rect x="3" y="2" width="1" height="1" fill="#fff"/><rect x="4" y="2" width="1" height="1" fill="#000"/><rect x="5" y="2" width="10" height="1" fill="#fff"/><rect x="15" y="2" width="1" height="1" fill="#000"/><rect x="2" y="3" width="1" height="1" fill="#fff"/><rect x="3" y="3" width="1" height="1" fill="#000"/><rect x="4" y="3" width="7" height="1" fill="#fff"/><rect x="11" y="3" width="1" height="1" fill="#0000ff"/><rect x="12" y="3" width="3" height="1" fill="#fff"/><rect x="15" y="3" width="1" height="1" fill="#000"/><rect x="2" y="4" width="1" height="1" fill="#000"/><rect x="3" y="4" width="1" height="1" fill="#fff"/><rect x="4" y="4" width="1" height="1" fill="#000"/><rect x="5" y="4" width="10" height="1" fill="#fff"/><rect x="15" y="4" width="1" height="1" fill="#000"/><rect x="2" y="5" width="1" height="1" fill="#fff"/><rect x="3" y="5" width="1" height="1" fill="#000"/><rect x="4" y="5" width="3" height="1" fill="#fff"/><rect x="7" y="5" width="1" height="1" fill="#ff0000"/><rect x="8" y="5" width="3" height="1" fill="#fff"/><rect x="11" y="5" width="1" height="1" fill="#0000ff"/><rect x="12" y="5" width="3" height="1" fill="#fff"/><rect x="15" y="5" width="1" height="1" fill="#000"/><rect x="2" y="6" width="1" height="1" fill="#000"/><rect x="3" y="6" width="1" height="1" fill="#fff"/><rect x="4" y="6" width="1" height="1" fill="#000"/><rect x="5" y="6" width="2" height="1" fill="#fff"/><rect x="7" y="6" width="1" height="1" fill="#ff0000"/><rect x="8" y="6" width="3" height="1" fill="#fff"/><rect x="11" y="6" width="1" height="1" fill="#0000ff"/><rect x="12" y="6" width="3" height="1" fill="#fff"/><rect x="15" y="6" width="1" height="1" fill="#000"/><rect x="2" y="7" width="1" height="1" fill="#fff"/><rect x="3" y="7" width="1" height="1" fill="#000"/><rect x="4" y="7" width="3" height="1" fill="#fff"/><rect x="7" y="7" width="1" height="1" fill="#ff0000"/><rect x="8" y="7" width="3" height="1" fill="#fff"/><rect x="11" y="7" width="1" height="1" fill="#0000ff"/><rect x="12" y="7" width="3" height="1" fill="#fff"/><rect x="15" y="7" width="1" height="1" fill="#000"/><rect x="2" y="8" width="1" height="1" fill="#000"/><rect x="3" y="8" width="1" height="1" fill="#fff"/><rect x="4" y="8" width="1" height="1" fill="#000"/><rect x="5" y="8" width="2" height="1" fill="#fff"/><rect x="7" y="8" width="1" height="1" fill="#ff0000"/><rect x="8" y="8" width="7" height="1" fill="#fff"/><rect x="15" y="8" width="1" height="1" fill="#000"/><rect x="2" y="9" width="1" height="1" fill="#fff"/><rect x="3" y="9" width="1" height="1" fill="#000"/><rect x="4" y="9" width="7" height="1" fill="#fff"/><rect x="11" y="9" width="1" height="1" fill="#800080"/><rect x="12" y="9" width="3" height="1" fill="#fff"/><rect x="15" y="9" width="1" height="1" fill="#000"/><rect x="2" y="10" width="1" height="1" fill="#000"/><rect x="3" y="10" width="1" height="1" fill="#fff"/><rect x="4" y="10" width="1" height="1" fill="#000"/><rect x="5" y="10" width="2" height="1" fill="#fff"/><rect x="7" y="10" width="1" height="1" fill="#ff0000"/><rect x="8" y="10" width="2" height="1" fill="#fff"/><rect x="10" y="10" width="1" height="1" fill="#800080"/><rect x="11" y="10" width="1" height="1" fill="#fff"/><rect x="12" y="10" width="1" height="1" fill="#800080"/><rect x="13" y="10" width="2" height="1" fill="#fff"/><rect x="15" y="10" width="1" height="1" fill="#000"/><rect x="2" y="11" width="1" height="1" fill="#fff"/><rect x="3" y="11" width="1" height="1" fill="#000"/><rect x="4" y="11" width="8" height="1" fill="#fff"/><rect x="12" y="11" width="1" height="1" fill="#800080"/><rect x="13" y="11" width="2" height="1" fill="#fff"/><rect x="15" y="11" width="1" height="1" fill="#000"/><rect x="2" y="12" width="1" height="1" fill="#000"/><rect x="3" y="12" width="1" height="1" fill="#fff"/><rect x="4" y="12" width="1" height="1" fill="#000"/><rect x="5" y="12" width="6" height="1" fill="#fff"/><rect x="11" y="12" width="1" height="1" fill="#800080"/><rect x="12" y="12" width="3" height="1" fill="#fff"/><rect x="15" y="12" width="1" height="1" fill="#000"/><rect x="2" y="13" width="1" height="1" fill="#fff"/><rect x="3" y="13" width="1" height="1" fill="#000"/><rect x="4" y="13" width="2" height="1" fill="#fff"/><rect x="6" y="13" width="7" height="1" fill="#c0c0c0"/><rect x="13" y="13" width="2" height="1" fill="#fff"/><rect x="15" y="13" width="1" height="1" fill="#000"/><rect x="2" y="14" width="1" height="1" fill="#000"/><rect x="3" y="14" width="1" height="1" fill="#fff"/><rect x="4" y="14" width="1" height="1" fill="#000"/><rect x="5" y="14" width="6" height="1" fill="#fff"/><rect x="11" y="14" width="1" height="1" fill="#800080"/><rect x="12" y="14" width="3" height="1" fill="#fff"/><rect x="15" y="14" width="1" height="1" fill="#000"/><rect x="3" y="15" width="1" height="1" fill="#000"/><rect x="4" y="15" width="11" height="1" fill="#fff"/><rect x="15" y="15" width="1" height="1" fill="#000"/><rect x="3" y="16" width="13" height="1" fill="#000"/></svg>
<div class="t" style="left:76px;top:286px;font-size:11px;letter-spacing:-0.2px">ACEEventLog</div>
<div class="a" style="left:237px;top:217px;width:432px;height:1px;background:#fbfbfb"></div>
<div class="a" style="left:237px;top:217px;width:1px;height:19px;background:#fbfbfb"></div>
<div class="a" style="left:238px;top:218px;width:431px;height:1px;background:#a8a8ac"></div>
<div class="a" style="left:238px;top:218px;width:1px;height:17px;background:#a8a8ac"></div>
<div class="a" style="left:238px;top:235px;width:431px;height:1px;background:#fbfbfb"></div>
<div class="t" style="left:244.5px;top:222px;font-size:11px;">Application</div>
<div class="t" style="left:309px;top:222px;font-size:11px;letter-spacing:0.3px">13 event(s)</div>
<div class="a" style="left:238px;top:236px;width:431px;height:316px;background:#fff"></div>
<div class="a" style="left:238px;top:236px;width:431px;height:1px;background:#a0a0a4"></div>
<div class="a" style="left:238px;top:237px;width:431px;height:1px;background:#88888c"></div>
<div class="a" style="left:238px;top:236px;width:1px;height:316px;background:#a0a0a4"></div>
<div class="a" style="left:239px;top:237px;width:1px;height:315px;background:#88888c"></div>
<div class="a" style="left:668px;top:238px;width:1px;height:314px;background:#dcdce0"></div>
<div class="a" style="left:240px;top:238px;width:428px;height:17px;background:#eae8ee"></div>
<div class="a" style="left:240px;top:252px;width:428px;height:1px;background:#d4d4d8"></div>
<div class="a" style="left:240px;top:253px;width:428px;height:1px;background:#a0a0a4"></div>
<div class="a" style="left:240px;top:254px;width:428px;height:1px;background:#88888c"></div>
<div class="a" style="left:240px;top:238px;width:88px;height:1px;background:#fff"></div>
<div class="a" style="left:240px;top:238px;width:1px;height:14px;background:#fff"></div>
<div class="t" style="left:245px;top:242px;font-size:11px;">Type</div>
<div class="a" style="left:330px;top:238px;width:80px;height:1px;background:#fff"></div>
<div class="a" style="left:330px;top:238px;width:1px;height:14px;background:#fff"></div>
<div class="t" style="left:335px;top:242px;font-size:11px;">Date</div>
<div class="a" style="left:412px;top:238px;width:71px;height:1px;background:#fff"></div>
<div class="a" style="left:412px;top:238px;width:1px;height:14px;background:#fff"></div>
<div class="t" style="left:417px;top:242px;font-size:11px;">Time</div>
<div class="a" style="left:485px;top:238px;width:132px;height:1px;background:#fff"></div>
<div class="a" style="left:485px;top:238px;width:1px;height:14px;background:#fff"></div>
<div class="t" style="left:490px;top:242px;font-size:11px;">Source</div>
<div class="a" style="left:619px;top:238px;width:49px;height:1px;background:#fff"></div>
<div class="a" style="left:619px;top:238px;width:1px;height:14px;background:#fff"></div>
<div class="t" style="left:624px;top:242px;font-size:11px;">Category</div>
<div class="a" style="left:327px;top:239px;width:1px;height:13px;background:#d4d4d8"></div>
<div class="a" style="left:328px;top:238px;width:2px;height:15px;background:#8c8c90"></div>
<div class="a" style="left:409px;top:239px;width:1px;height:13px;background:#d4d4d8"></div>
<div class="a" style="left:410px;top:238px;width:2px;height:15px;background:#8c8c90"></div>
<div class="a" style="left:482px;top:239px;width:1px;height:13px;background:#d4d4d8"></div>
<div class="a" style="left:483px;top:238px;width:2px;height:15px;background:#8c8c90"></div>
<div class="a" style="left:616px;top:239px;width:1px;height:13px;background:#d4d4d8"></div>
<div class="a" style="left:617px;top:238px;width:2px;height:15px;background:#8c8c90"></div>
<div class="a" style="left:668px;top:236px;width:1px;height:19px;background:#dcdce0"></div>
<div class="a" style="left:669px;top:236px;width:1px;height:19px;background:#fff"></div>
<div class="a" style="left:668px;top:218px;width:1px;height:18px;background:#a8a8ac"></div>
<svg class="a" style="left:240px;top:255px" width="18" height="18" viewBox="0 0 18 18">
<path d="M9.3 2.2C5.3 2.2 2.3 4.7 2.3 7.8C2.3 10.2 4.2 12.2 7 13L10.8 16.6L11 13.2C14.3 12.7 16.3 10.5 16.3 7.8C16.3 4.7 13.3 2.2 9.3 2.2Z" fill="#fff" stroke="#000" stroke-width="1.1"/>
<path d="M3 7A6.3 4.8 0 0 1 9.3 2.4" stroke="#909090" stroke-width="1.2" fill="none"/>
<path d="M8 3.9H11V5.7H8.6Z" fill="#0000ff"/>
<path d="M7 7H11V10.9H12V12H7V10.9H8V8H7Z" fill="#0000ff"/>
</svg>
<div class="t" style="left:259px;top:261px;font-size:11px;color:#000;letter-spacing:0.3px">Information</div>
<div class="t" style="left:335.5px;top:261px;font-size:11px;color:#000;letter-spacing:0.25px">13/12/2005</div>
<div class="t" style="left:418px;top:261px;font-size:11px;color:#000">4:10:02 PM</div>
<div class="t" style="left:490px;top:261px;font-size:11px;color:#000">EnoughPI</div>
<div class="t" style="left:624px;top:261px;font-size:11px;color:#000">None</div>
<svg class="a" style="left:240px;top:272px" width="18" height="18" viewBox="0 0 18 18">
<path d="M9.3 2.2C5.3 2.2 2.3 4.7 2.3 7.8C2.3 10.2 4.2 12.2 7 13L10.8 16.6L11 13.2C14.3 12.7 16.3 10.5 16.3 7.8C16.3 4.7 13.3 2.2 9.3 2.2Z" fill="#fff" stroke="#000" stroke-width="1.1"/>
<path d="M3 7A6.3 4.8 0 0 1 9.3 2.4" stroke="#909090" stroke-width="1.2" fill="none"/>
<path d="M8 3.9H11V5.7H8.6Z" fill="#0000ff"/>
<path d="M7 7H11V10.9H12V12H7V10.9H8V8H7Z" fill="#0000ff"/>
</svg>
<div class="t" style="left:259px;top:278px;font-size:11px;color:#000;letter-spacing:0.3px">Information</div>
<div class="t" style="left:335.5px;top:278px;font-size:11px;color:#000;letter-spacing:0.25px">13/12/2005</div>
<div class="t" style="left:418px;top:278px;font-size:11px;color:#000">4:10:02 PM</div>
<div class="t" style="left:490px;top:278px;font-size:11px;color:#000">EnoughPI</div>
<div class="t" style="left:624px;top:278px;font-size:11px;color:#000">None</div>
<svg class="a" style="left:240px;top:289px" width="18" height="18" viewBox="0 0 18 18">
<path d="M9.3 2.2C5.3 2.2 2.3 4.7 2.3 7.8C2.3 10.2 4.2 12.2 7 13L10.8 16.6L11 13.2C14.3 12.7 16.3 10.5 16.3 7.8C16.3 4.7 13.3 2.2 9.3 2.2Z" fill="#fff" stroke="#000" stroke-width="1.1"/>
<path d="M3 7A6.3 4.8 0 0 1 9.3 2.4" stroke="#909090" stroke-width="1.2" fill="none"/>
<path d="M8 3.9H11V5.7H8.6Z" fill="#0000ff"/>
<path d="M7 7H11V10.9H12V12H7V10.9H8V8H7Z" fill="#0000ff"/>
</svg>
<div class="t" style="left:259px;top:295px;font-size:11px;color:#000;letter-spacing:0.3px">Information</div>
<div class="t" style="left:335.5px;top:295px;font-size:11px;color:#000;letter-spacing:0.25px">13/12/2005</div>
<div class="t" style="left:418px;top:295px;font-size:11px;color:#000">4:10:02 PM</div>
<div class="t" style="left:490px;top:295px;font-size:11px;color:#000">EnoughPI</div>
<div class="t" style="left:624px;top:295px;font-size:11px;color:#000">None</div>
<svg class="a" style="left:240px;top:306px" width="18" height="18" viewBox="0 0 18 18">
<path d="M9.3 2.2C5.3 2.2 2.3 4.7 2.3 7.8C2.3 10.2 4.2 12.2 7 13L10.8 16.6L11 13.2C14.3 12.7 16.3 10.5 16.3 7.8C16.3 4.7 13.3 2.2 9.3 2.2Z" fill="#fff" stroke="#000" stroke-width="1.1"/>
<path d="M3 7A6.3 4.8 0 0 1 9.3 2.4" stroke="#909090" stroke-width="1.2" fill="none"/>
<path d="M8 3.9H11V5.7H8.6Z" fill="#0000ff"/>
<path d="M7 7H11V10.9H12V12H7V10.9H8V8H7Z" fill="#0000ff"/>
</svg>
<div class="t" style="left:259px;top:312px;font-size:11px;color:#000;letter-spacing:0.3px">Information</div>
<div class="t" style="left:335.5px;top:312px;font-size:11px;color:#000;letter-spacing:0.25px">13/12/2005</div>
<div class="t" style="left:418px;top:312px;font-size:11px;color:#000">4:10:02 PM</div>
<div class="t" style="left:490px;top:312px;font-size:11px;color:#000">EnoughPI</div>
<div class="t" style="left:624px;top:312px;font-size:11px;color:#000">None</div>
<svg class="a" style="left:240px;top:323px" width="18" height="18" viewBox="0 0 18 18">
<path d="M9.3 2.2C5.3 2.2 2.3 4.7 2.3 7.8C2.3 10.2 4.2 12.2 7 13L10.8 16.6L11 13.2C14.3 12.7 16.3 10.5 16.3 7.8C16.3 4.7 13.3 2.2 9.3 2.2Z" fill="#fff" stroke="#000" stroke-width="1.1"/>
<path d="M3 7A6.3 4.8 0 0 1 9.3 2.4" stroke="#909090" stroke-width="1.2" fill="none"/>
<path d="M8 3.9H11V5.7H8.6Z" fill="#0000ff"/>
<path d="M7 7H11V10.9H12V12H7V10.9H8V8H7Z" fill="#0000ff"/>
</svg>
<div class="t" style="left:259px;top:329px;font-size:11px;color:#000;letter-spacing:0.3px">Information</div>
<div class="t" style="left:335.5px;top:329px;font-size:11px;color:#000;letter-spacing:0.25px">13/12/2005</div>
<div class="t" style="left:418px;top:329px;font-size:11px;color:#000">4:10:02 PM</div>
<div class="t" style="left:490px;top:329px;font-size:11px;color:#000">EnoughPI</div>
<div class="t" style="left:624px;top:329px;font-size:11px;color:#000">None</div>
<svg class="a" style="left:240px;top:340px" width="18" height="18" viewBox="0 0 18 18">
<path d="M9.3 2.2C5.3 2.2 2.3 4.7 2.3 7.8C2.3 10.2 4.2 12.2 7 13L10.8 16.6L11 13.2C14.3 12.7 16.3 10.5 16.3 7.8C16.3 4.7 13.3 2.2 9.3 2.2Z" fill="#fff" stroke="#000" stroke-width="1.1"/>
<path d="M3 7A6.3 4.8 0 0 1 9.3 2.4" stroke="#909090" stroke-width="1.2" fill="none"/>
<path d="M8 3.9H11V5.7H8.6Z" fill="#0000ff"/>
<path d="M7 7H11V10.9H12V12H7V10.9H8V8H7Z" fill="#0000ff"/>
</svg>
<div class="t" style="left:259px;top:346px;font-size:11px;color:#000;letter-spacing:0.3px">Information</div>
<div class="t" style="left:335.5px;top:346px;font-size:11px;color:#000;letter-spacing:0.25px">13/12/2005</div>
<div class="t" style="left:418px;top:346px;font-size:11px;color:#000">4:10:02 PM</div>
<div class="t" style="left:490px;top:346px;font-size:11px;color:#000">EnoughPI</div>
<div class="t" style="left:624px;top:346px;font-size:11px;color:#000">None</div>
<svg class="a" style="left:240px;top:357px" width="18" height="18" viewBox="0 0 18 18">
<path d="M9.3 2.2C5.3 2.2 2.3 4.7 2.3 7.8C2.3 10.2 4.2 12.2 7 13L10.8 16.6L11 13.2C14.3 12.7 16.3 10.5 16.3 7.8C16.3 4.7 13.3 2.2 9.3 2.2Z" fill="#fff" stroke="#000" stroke-width="1.1"/>
<path d="M3 7A6.3 4.8 0 0 1 9.3 2.4" stroke="#909090" stroke-width="1.2" fill="none"/>
<path d="M8 3.9H11V5.7H8.6Z" fill="#0000ff"/>
<path d="M7 7H11V10.9H12V12H7V10.9H8V8H7Z" fill="#0000ff"/>
</svg>
<div class="t" style="left:259px;top:363px;font-size:11px;color:#000;letter-spacing:0.3px">Information</div>
<div class="t" style="left:335.5px;top:363px;font-size:11px;color:#000;letter-spacing:0.25px">13/12/2005</div>
<div class="t" style="left:418px;top:363px;font-size:11px;color:#000">4:10:02 PM</div>
<div class="t" style="left:490px;top:363px;font-size:11px;color:#000">EnoughPI</div>
<div class="t" style="left:624px;top:363px;font-size:11px;color:#000">None</div>
<svg class="a" style="left:240px;top:374px" width="18" height="18" viewBox="0 0 18 18">
<path d="M9.3 2.2C5.3 2.2 2.3 4.7 2.3 7.8C2.3 10.2 4.2 12.2 7 13L10.8 16.6L11 13.2C14.3 12.7 16.3 10.5 16.3 7.8C16.3 4.7 13.3 2.2 9.3 2.2Z" fill="#fff" stroke="#000" stroke-width="1.1"/>
<path d="M3 7A6.3 4.8 0 0 1 9.3 2.4" stroke="#909090" stroke-width="1.2" fill="none"/>
<path d="M8 3.9H11V5.7H8.6Z" fill="#0000ff"/>
<path d="M7 7H11V10.9H12V12H7V10.9H8V8H7Z" fill="#0000ff"/>
</svg>
<div class="t" style="left:259px;top:380px;font-size:11px;color:#000;letter-spacing:0.3px">Information</div>
<div class="t" style="left:335.5px;top:380px;font-size:11px;color:#000;letter-spacing:0.25px">13/12/2005</div>
<div class="t" style="left:418px;top:380px;font-size:11px;color:#000">4:10:02 PM</div>
<div class="t" style="left:490px;top:380px;font-size:11px;color:#000">EnoughPI</div>
<div class="t" style="left:624px;top:380px;font-size:11px;color:#000">None</div>
<svg class="a" style="left:240px;top:391px" width="18" height="18" viewBox="0 0 18 18">
<path d="M9.3 2.2C5.3 2.2 2.3 4.7 2.3 7.8C2.3 10.2 4.2 12.2 7 13L10.8 16.6L11 13.2C14.3 12.7 16.3 10.5 16.3 7.8C16.3 4.7 13.3 2.2 9.3 2.2Z" fill="#fff" stroke="#000" stroke-width="1.1"/>
<path d="M3 7A6.3 4.8 0 0 1 9.3 2.4" stroke="#909090" stroke-width="1.2" fill="none"/>
<path d="M8 3.9H11V5.7H8.6Z" fill="#0000ff"/>
<path d="M7 7H11V10.9H12V12H7V10.9H8V8H7Z" fill="#0000ff"/>
</svg>
<div class="t" style="left:259px;top:397px;font-size:11px;color:#000;letter-spacing:0.3px">Information</div>
<div class="t" style="left:335.5px;top:397px;font-size:11px;color:#000;letter-spacing:0.25px">13/12/2005</div>
<div class="t" style="left:418px;top:397px;font-size:11px;color:#000">4:10:02 PM</div>
<div class="t" style="left:490px;top:397px;font-size:11px;color:#000">EnoughPI</div>
<div class="t" style="left:624px;top:397px;font-size:11px;color:#000">None</div>
<svg class="a" style="left:240px;top:408px" width="18" height="18" viewBox="0 0 18 18">
<path d="M9.3 2.2C5.3 2.2 2.3 4.7 2.3 7.8C2.3 10.2 4.2 12.2 7 13L10.8 16.6L11 13.2C14.3 12.7 16.3 10.5 16.3 7.8C16.3 4.7 13.3 2.2 9.3 2.2Z" fill="#fff" stroke="#000" stroke-width="1.1"/>
<path d="M3 7A6.3 4.8 0 0 1 9.3 2.4" stroke="#909090" stroke-width="1.2" fill="none"/>
<path d="M8 3.9H11V5.7H8.6Z" fill="#0000ff"/>
<path d="M7 7H11V10.9H12V12H7V10.9H8V8H7Z" fill="#0000ff"/>
</svg>
<div class="t" style="left:259px;top:414px;font-size:11px;color:#000;letter-spacing:0.3px">Information</div>
<div class="t" style="left:335.5px;top:414px;font-size:11px;color:#000;letter-spacing:0.25px">13/12/2005</div>
<div class="t" style="left:418px;top:414px;font-size:11px;color:#000">4:10:02 PM</div>
<div class="t" style="left:490px;top:414px;font-size:11px;color:#000">EnoughPI</div>
<div class="t" style="left:624px;top:414px;font-size:11px;color:#000">None</div>
<svg class="a" style="left:240px;top:425px" width="18" height="18" viewBox="0 0 18 18">
<path d="M9.3 2.2C5.3 2.2 2.3 4.7 2.3 7.8C2.3 10.2 4.2 12.2 7 13L10.8 16.6L11 13.2C14.3 12.7 16.3 10.5 16.3 7.8C16.3 4.7 13.3 2.2 9.3 2.2Z" fill="#fff" stroke="#000" stroke-width="1.1"/>
<path d="M3 7A6.3 4.8 0 0 1 9.3 2.4" stroke="#909090" stroke-width="1.2" fill="none"/>
<path d="M8 3.9H11V5.7H8.6Z" fill="#0000ff"/>
<path d="M7 7H11V10.9H12V12H7V10.9H8V8H7Z" fill="#0000ff"/>
</svg>
<div class="t" style="left:259px;top:431px;font-size:11px;color:#000;letter-spacing:0.3px">Information</div>
<div class="t" style="left:335.5px;top:431px;font-size:11px;color:#000;letter-spacing:0.25px">13/12/2005</div>
<div class="t" style="left:418px;top:431px;font-size:11px;color:#000">4:10:02 PM</div>
<div class="t" style="left:490px;top:431px;font-size:11px;color:#000">EnoughPI</div>
<div class="t" style="left:624px;top:431px;font-size:11px;color:#000">None</div>
<svg class="a" style="left:240px;top:442px" width="18" height="18" viewBox="0 0 18 18">
<path d="M9.3 2.2C5.3 2.2 2.3 4.7 2.3 7.8C2.3 10.2 4.2 12.2 7 13L10.8 16.6L11 13.2C14.3 12.7 16.3 10.5 16.3 7.8C16.3 4.7 13.3 2.2 9.3 2.2Z" fill="#fff" stroke="#000" stroke-width="1.1"/>
<path d="M3 7A6.3 4.8 0 0 1 9.3 2.4" stroke="#909090" stroke-width="1.2" fill="none"/>
<path d="M8 3.9H11V5.7H8.6Z" fill="#0000ff"/>
<path d="M7 7H11V10.9H12V12H7V10.9H8V8H7Z" fill="#0000ff"/>
</svg>
<div class="t" style="left:259px;top:448px;font-size:11px;color:#000;letter-spacing:0.3px">Information</div>
<div class="t" style="left:335.5px;top:448px;font-size:11px;color:#000;letter-spacing:0.25px">13/12/2005</div>
<div class="t" style="left:418px;top:448px;font-size:11px;color:#000">4:10:02 PM</div>
<div class="t" style="left:490px;top:448px;font-size:11px;color:#000">EnoughPI</div>
<div class="t" style="left:624px;top:448px;font-size:11px;color:#000">None</div>
<div class="a" style="left:258px;top:461px;width:410px;height:17px;background:#3160aa;border:1px dotted #d8a848;border-right:none"></div>
<svg class="a" style="left:240px;top:459px" width="18" height="18" viewBox="0 0 18 18">
<path d="M9.3 2.2C5.3 2.2 2.3 4.7 2.3 7.8C2.3 10.2 4.2 12.2 7 13L10.8 16.6L11 13.2C14.3 12.7 16.3 10.5 16.3 7.8C16.3 4.7 13.3 2.2 9.3 2.2Z" fill="#fff" stroke="#000" stroke-width="1.1"/>
<path d="M3 7A6.3 4.8 0 0 1 9.3 2.4" stroke="#909090" stroke-width="1.2" fill="none"/>
<path d="M8 3.9H11V5.7H8.6Z" fill="#0000ff"/>
<path d="M7 7H11V10.9H12V12H7V10.9H8V8H7Z" fill="#0000ff"/>
</svg>
<svg class="a" style="left:240px;top:459px" width="18" height="18" viewBox="0 0 18 18" shape-rendering="crispEdges"><defs><pattern id="selp" width="2" height="2" patternUnits="userSpaceOnUse"><rect width="1" height="1" fill="#3160aa"/><rect x="1" y="1" width="1" height="1" fill="#3160aa"/></pattern></defs><path d="M9.3 2C5.1 2 2 4.6 2 7.8C2 10.3 4 12.3 7 13.2L10.8 16.8L11.2 13.4C14.6 12.8 16.6 10.5 16.6 7.8C16.6 4.6 13.5 2 9.3 2Z" fill="url(#selp)"/></svg>
<div class="t" style="left:259px;top:465px;font-size:11px;color:#fff;letter-spacing:0.3px">Information</div>
<div class="t" style="left:335.5px;top:465px;font-size:11px;color:#fff;letter-spacing:0.25px">13/12/2005</div>
<div class="t" style="left:418px;top:465px;font-size:11px;color:#fff">4:10:02 PM</div>
<div class="t" style="left:490px;top:465px;font-size:11px;color:#fff">EnoughPI</div>
<div class="t" style="left:624px;top:465px;font-size:11px;color:#fff">None</div>
<div class="a" style="left:240px;top:535px;width:428px;height:16px;background:linear-gradient(#e2ecfc,#f6f9ff 80%,#fbfcff)"></div>
<div class="a" style="left:240px;top:535px;width:17px;height:16px;border:1px solid #98acc8;border-radius:2px;background:linear-gradient(#f4f8fe 0,#dce8fa 40%,#c6d8f2 75%,#b8cce8);box-shadow:inset 1px 1px 0 #fff"></div>
<div class="a" style="left:256px;top:535px;width:250px;height:16px;border:1px solid #98acc8;border-radius:2px;background:linear-gradient(#f4f8fe 0,#dce8fa 40%,#c6d8f2 75%,#b8cce8);box-shadow:inset 1px 1px 0 #fff"></div>
<div class="a" style="left:651px;top:535px;width:17px;height:16px;border:1px solid #98acc8;border-radius:2px;background:linear-gradient(#f4f8fe 0,#dce8fa 40%,#c6d8f2 75%,#b8cce8);box-shadow:inset 1px 1px 0 #fff"></div>
<svg class="a" style="left:240px;top:535px" width="17" height="16"><path d="M9.8 3.8L5.6 8L9.8 12.2" stroke="#4a5060" stroke-width="2" fill="none"/></svg>
<svg class="a" style="left:651px;top:535px" width="17" height="16"><path d="M7.2 3.8L11.4 8L7.2 12.2" stroke="#4a5060" stroke-width="2" fill="none"/></svg>
<div class="a" style="left:377px;top:540px;width:1px;height:6px;background:#fff"></div>
<div class="a" style="left:378px;top:540px;width:1px;height:6px;background:#7888a8"></div>
<div class="a" style="left:379px;top:540px;width:1px;height:6px;background:#fff"></div>
<div class="a" style="left:380px;top:540px;width:1px;height:6px;background:#7888a8"></div>
<div class="a" style="left:381px;top:540px;width:1px;height:6px;background:#fff"></div>
<div class="a" style="left:382px;top:540px;width:1px;height:6px;background:#7888a8"></div>
<div class="a" style="left:383px;top:540px;width:1px;height:6px;background:#fff"></div>
<div class="a" style="left:384px;top:540px;width:1px;height:6px;background:#7888a8"></div>
<div class="a" style="left:240px;top:551px;width:428px;height:1px;background:#f8f8fa"></div>
<div class="a" style="left:35px;top:552px;width:635px;height:1px;background:#e2e2e6"></div>
<div class="a" style="left:35px;top:553px;width:635px;height:23px;background:#eef1f7"></div>
<div class="a" style="left:448px;top:557px;width:1px;height:17px;background:#c8c8cc"></div>
<div class="a" style="left:581px;top:557px;width:1px;height:17px;background:#c8c8cc"></div>
<div class="a" style="left:666px;top:557px;width:1px;height:17px;background:#c8c8cc"></div>
</body></html>
